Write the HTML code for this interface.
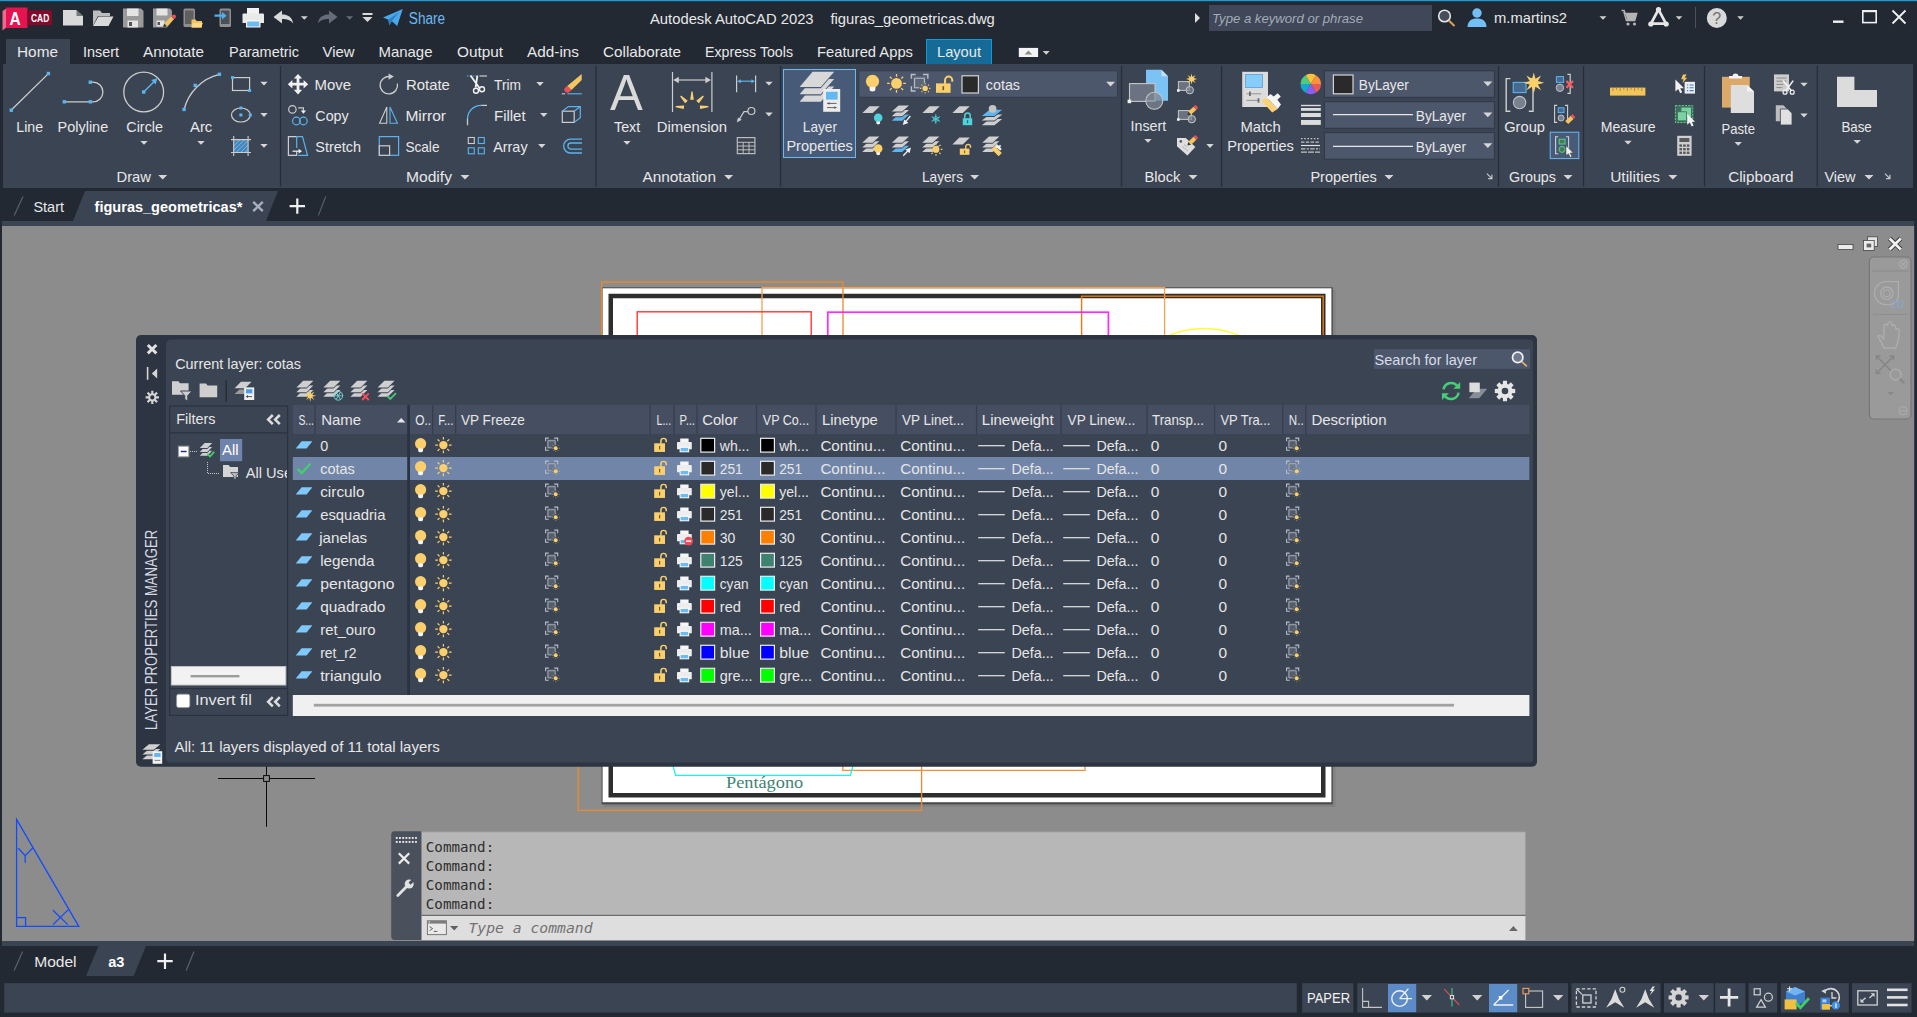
<!DOCTYPE html>
<html lang="en"><head><meta charset="utf-8"><title>Autodesk AutoCAD 2023 - figuras_geometricas.dwg</title>
<style>
html,body{margin:0;padding:0;background:#222933;overflow:hidden}
body{width:1917px;height:1017px;font-family:"Liberation Sans",sans-serif}
svg{display:block;position:absolute;left:0;top:0;font-family:"Liberation Sans",sans-serif}
text{white-space:pre}
</style></head><body>
<svg width="1917" height="1017" viewBox="0 0 1917 1017" shape-rendering="auto">
<rect x="0" y="0" width="1917" height="1017" fill="#222933"/>
<rect x="0" y="0" width="1917" height="1.2" fill="#1c9ad6"/>
<path d="M2.5 11 L7 8 L7 27 L2.5 30.5z" fill="#f0698c"/>
<path d="M6 7.5 h21.5 v20.5 h-21.5z" fill="#e5134f"/>
<rect x="27.5" y="10.3" width="24.5" height="14.9" fill="#820a2a"/>
<text x="9.4" y="25" font-size="18" fill="#ffffff" font-weight="bold" textLength="11.2" lengthAdjust="spacingAndGlyphs">A</text>
<text x="31" y="21.6" font-size="10.5" fill="#ffffff" font-weight="bold" textLength="18.2" lengthAdjust="spacingAndGlyphs">CAD</text>
<path d="M63 10 h13.5 l6.5 6 v9.5 h-20z" fill="#d9d9d9"/>
<path d="M76.5 10 v6 h6.5z" fill="#222933" opacity="0.55"/>
<path d="M93 10.5 h7 l2 2.5 h8 v3 h-12 l-5 9.5z" fill="#bdbdbd"/>
<path d="M98.5 16.5 h15 l-5 9.5 h-15.5z" fill="#d9d9d9"/>
<path d="M123 8.5 h18 l2.5 2.5 v16.5 h-20.5z" fill="#9a9a9a"/>
<rect x="127" y="8.5" width="11.5" height="7.5" fill="#e4e4e4"/>
<rect x="127.5" y="20.5" width="10.5" height="7" fill="#e4e4e4"/>
<rect x="129" y="22" width="3" height="4" fill="#555"/>
<path d="M153 8.5 h17 l2 2 v11 l-5 6 h-14z" fill="#9a9a9a"/>
<rect x="156.5" y="8.5" width="11" height="7" fill="#e4e4e4"/>
<rect x="156.5" y="20.5" width="8" height="6" fill="#e4e4e4"/>
<rect x="157.5" y="22" width="2.5" height="3" fill="#555"/>
<path d="M163 27.5 l1.2 -4 l7 -7 l2.8 2.8 l-7 7z" fill="#f2c45e"/>
<path d="M171.2 16.5 l1.4 -1.4 a1.8 1.8 0 0 1 2.8 2.8 l-1.4 1.4z" fill="#e8505a"/>
<path d="M163 27.5 l1.2 -4 l2.8 2.8z" fill="#3a3a3a"/>
<rect x="183.5" y="8.5" width="11.5" height="18.5" fill="#8f8f8f" rx="1.5"/>
<rect x="185" y="10.5" width="8.5" height="13.5" fill="#5f5f5f"/>
<path d="M191.5 19.5 h4 l1.2 1.5 h5.3 v6.5 h-10.5z" fill="#f2c45e"/>
<path d="M193 23 h9.8 l-1.6 4.5 h-9.7z" fill="#ffd98a"/>
<rect x="219.5" y="8.5" width="11.5" height="18.5" fill="#8f8f8f" rx="1.5"/>
<rect x="221" y="10.5" width="8.5" height="13.5" fill="#4a4f58"/>
<path d="M214.5 14.6 h7.5 v-2.6 l4.6 3.7 l-4.6 3.7 v-2.6 h-7.5z" fill="#4fb0f0"/>
<rect x="247" y="8" width="12" height="6" fill="#f2f2f2"/>
<path d="M243.5 13.5 h19.5 a1 1 0 0 1 1 1 v8.5 h-21.5 v-8.5 a1 1 0 0 1 1 -1z" fill="#e9e9e9"/>
<rect x="246" y="20" width="14.5" height="7.5" fill="#f6f6f6"/>
<rect x="247.2" y="21.5" width="12" height="5" fill="#6bbcf2"/>
<path d="M273.5 17 l8.5 -6.5 v4 c6 0 10 2.5 11.2 9 c-2.8 -3.6 -6 -4.6 -11.2 -4.6 v4.6z" fill="#d9d9d9"/>
<path d="M300.8 16.2h7l-3.5 3.6z" fill="#cfcfcf"/>
<path d="M337.5 17 l-8.5 -6.5 v4 c-6 0 -10 2.5 -11.2 9 c2.8 -3.6 6 -4.6 11.2 -4.6 v4.6z" fill="#666d7a"/>
<path d="M346.1 16.2h7l-3.5 3.6z" fill="#666d7a"/>
<rect x="362.5" y="13" width="10" height="2" fill="#d9d9d9"/>
<path d="M362.5 17h10l-5 5z" fill="#d9d9d9"/>
<path d="M383 17.5 L402.8 9 L397.2 26 L391.8 21.2 L389.2 25.2 L388.4 19.8z" fill="#49a7ea"/>
<path d="M388.4 19.8 L399 12 L391.8 21.2 L389.2 25.2z" fill="#2f7fc0"/>
<text x="408.8" y="24" font-size="16" fill="#6db9f1" textLength="36.4" lengthAdjust="spacingAndGlyphs">Share</text>
<text x="650" y="23.5" font-size="15.5" fill="#e8e8e8" textLength="163.6" lengthAdjust="spacingAndGlyphs">Autodesk AutoCAD 2023</text>
<text x="830.4" y="23.5" font-size="15.5" fill="#e8e8e8" textLength="164.4" lengthAdjust="spacingAndGlyphs">figuras_geometricas.dwg</text>
<path d="M1195 13 l5 5 l-5 5z" fill="#e0e0e0"/>
<rect x="1209" y="5" width="223" height="26" fill="#3f4758"/>
<text x="1212" y="22.5" font-size="13.5" fill="#a4abb8" font-style="italic" textLength="151" lengthAdjust="spacingAndGlyphs">Type a keyword or phrase</text>
<circle cx="1444.5" cy="16" r="5.8" fill="#464e5c" stroke="#e6e6e6" stroke-width="1.6"/>
<line x1="1448.8" y1="20.5" x2="1454.5" y2="26" stroke="#e0a050" stroke-width="2"/>
<circle cx="1477" cy="13" r="4.7" fill="#72bff5"/>
<path d="M1467.5 27 c0 -6 4 -8.5 9.5 -8.5 s9.5 2.5 9.5 8.5z" fill="#72bff5"/>
<text x="1494" y="23.3" font-size="15" fill="#e8e8e8" textLength="73" lengthAdjust="spacingAndGlyphs">m.martins2</text>
<path d="M1599.5 16.2h7l-3.5 3.6z" fill="#cfcfcf"/>
<path d="M1621.5 10.5 h2.6 l1 3 h11.6 l-2 7 h-8.2 l-2.6 -8.6" fill="none" stroke="#b4b4b4" stroke-width="1.5"/>
<path d="M1625.5 14 h10.8 l-1.7 6 h-7.4z" fill="#b4b4b4"/>
<circle cx="1628" cy="24" r="1.6" fill="#b4b4b4"/>
<circle cx="1634.5" cy="24" r="1.6" fill="#b4b4b4"/>
<path d="M1658.5 9.5 L1651 23.6 h15z" fill="none" stroke="#e6e6e6" stroke-width="2.7"/>
<circle cx="1658.5" cy="9.5" r="2.6" fill="#e6e6e6"/>
<circle cx="1650.8" cy="24" r="2.6" fill="#e6e6e6"/>
<circle cx="1666.2" cy="24" r="2.6" fill="#e6e6e6"/>
<path d="M1675.75 16.3h6.5l-3.25 3.4z" fill="#cfcfcf"/>
<line x1="1695.5" y1="7" x2="1695.5" y2="28" stroke="#4a5262" stroke-width="1"/>
<circle cx="1716.8" cy="18" r="10" fill="#d9d9d9"/>
<text x="1716.8" y="23.8" font-size="16" fill="#707070" text-anchor="middle">?</text>
<path d="M1737.25 16.3h6.5l-3.25 3.4z" fill="#cfcfcf"/>
<rect x="1833" y="20.5" width="10.5" height="2.4" fill="#f0f0f0"/>
<rect x="1862.8" y="11" width="13.4" height="11.6" fill="none" stroke="#f0f0f0" stroke-width="1.6"/>
<rect x="1862" y="10" width="15" height="2.2" fill="#f0f0f0"/>
<path d="M1892.5 10.5 L1905.5 23.5 M1905.5 10.5 L1892.5 23.5" fill="none" stroke="#f0f0f0" stroke-width="1.8"/>
<rect x="6" y="39" width="64" height="26" fill="#3b4453"/>
<rect x="926.5" y="39.5" width="65" height="25" fill="#156b96" stroke="#0f9ade" stroke-width="1"/>
<text x="17" y="57" font-size="15" fill="#e8e8e8" textLength="41" lengthAdjust="spacingAndGlyphs">Home</text>
<text x="83" y="57" font-size="15" fill="#e8e8e8" textLength="36" lengthAdjust="spacingAndGlyphs">Insert</text>
<text x="143" y="57" font-size="15" fill="#e8e8e8" textLength="61" lengthAdjust="spacingAndGlyphs">Annotate</text>
<text x="229" y="57" font-size="15" fill="#e8e8e8" textLength="70" lengthAdjust="spacingAndGlyphs">Parametric</text>
<text x="322.5" y="57" font-size="15" fill="#e8e8e8" textLength="32" lengthAdjust="spacingAndGlyphs">View</text>
<text x="378.5" y="57" font-size="15" fill="#e8e8e8" textLength="54" lengthAdjust="spacingAndGlyphs">Manage</text>
<text x="457" y="57" font-size="15" fill="#e8e8e8" textLength="46" lengthAdjust="spacingAndGlyphs">Output</text>
<text x="527" y="57" font-size="15" fill="#e8e8e8" textLength="52" lengthAdjust="spacingAndGlyphs">Add-ins</text>
<text x="603" y="57" font-size="15" fill="#e8e8e8" textLength="78" lengthAdjust="spacingAndGlyphs">Collaborate</text>
<text x="705" y="57" font-size="15" fill="#e8e8e8" textLength="88" lengthAdjust="spacingAndGlyphs">Express Tools</text>
<text x="817" y="57" font-size="15" fill="#e8e8e8" textLength="96" lengthAdjust="spacingAndGlyphs">Featured Apps</text>
<text x="937" y="57" font-size="15" fill="#e8e8e8" textLength="44" lengthAdjust="spacingAndGlyphs">Layout</text>
<rect x="1018.8" y="47.9" width="19.3" height="9.1" fill="#f4f4f4"/>
<path d="M1024.6 54.4 l3.8 -3.8 l3.8 3.8z" fill="#8a8a8a"/>
<path d="M1042.7 51h7l-3.5 3.8z" fill="#cfcfcf"/>
<rect x="3" y="64" width="1910" height="124" fill="#3b4453"/>
<rect x="279.9" y="66" width="1.3" height="120.5" fill="#272d39"/>
<rect x="595.4" y="66" width="1.3" height="120.5" fill="#272d39"/>
<rect x="779.9" y="66" width="1.3" height="120.5" fill="#272d39"/>
<rect x="1120.9" y="66" width="1.3" height="120.5" fill="#272d39"/>
<rect x="1220.9" y="66" width="1.3" height="120.5" fill="#272d39"/>
<rect x="1497.9" y="66" width="1.3" height="120.5" fill="#272d39"/>
<rect x="1582.9" y="66" width="1.3" height="120.5" fill="#272d39"/>
<rect x="1703.9" y="66" width="1.3" height="120.5" fill="#272d39"/>
<rect x="1816.7" y="66" width="1.3" height="120.5" fill="#272d39"/>
<line x1="11.3" y1="110" x2="48.4" y2="73.6" stroke="#cdcdcd" stroke-width="1.3"/>
<rect x="9.6" y="108.5" width="3.4" height="3.4" fill="#5bb4ee"/>
<rect x="46.7" y="71.8" width="3.4" height="3.4" fill="#5bb4ee"/>
<text x="16.3" y="132" font-size="14.5" fill="#e8e8e8" textLength="26.7" lengthAdjust="spacingAndGlyphs">Line</text>
<path d="M64.3 101.8 H90.3 M90.3 101.8 h2.8 a9.8 9.8 0 0 0 0 -19.6 h-2.8" fill="none" stroke="#cdcdcd" stroke-width="1.3"/>
<rect x="62.6" y="100.1" width="3.4" height="3.4" fill="#5bb4ee"/>
<rect x="88.6" y="100.1" width="3.4" height="3.4" fill="#5bb4ee"/>
<rect x="88.6" y="80.5" width="3.4" height="3.4" fill="#5bb4ee"/>
<text x="57.5" y="132" font-size="14.5" fill="#e8e8e8" textLength="50.7" lengthAdjust="spacingAndGlyphs">Polyline</text>
<circle cx="143.7" cy="92" r="19.9" fill="none" stroke="#cdcdcd" stroke-width="1.3"/>
<line x1="143.7" y1="92" x2="155" y2="80.7" stroke="#5bb4ee" stroke-width="1.4"/>
<path d="M157.4 78.2 l-1.8 6.2 l-4.4 -4.4z" fill="#5bb4ee"/>
<rect x="142" y="90.3" width="3.4" height="3.4" fill="#5bb4ee"/>
<text x="126.3" y="132" font-size="14.5" fill="#e8e8e8" textLength="36.7" lengthAdjust="spacingAndGlyphs">Circle</text>
<path d="M140.3 140.9h7.4l-3.7 3.8z" fill="#d6d6d6"/>
<path d="M184.1 109.4 A48 48 0 0 1 219.4 74.3" fill="none" stroke="#cdcdcd" stroke-width="1.3"/>
<rect x="182.4" y="107.7" width="3.4" height="3.4" fill="#5bb4ee"/>
<rect x="193.5" y="83.7" width="3.4" height="3.4" fill="#5bb4ee"/>
<rect x="217.7" y="72.6" width="3.4" height="3.4" fill="#5bb4ee"/>
<text x="190" y="132" font-size="14.5" fill="#e8e8e8" textLength="22.3" lengthAdjust="spacingAndGlyphs">Arc</text>
<path d="M197.3 140.9h7.4l-3.7 3.8z" fill="#d6d6d6"/>
<rect x="232.5" y="77.6" width="17.1" height="12.9" fill="none" stroke="#cdcdcd" stroke-width="1.2"/>
<rect x="231" y="76.1" width="3" height="3" fill="#5bb4ee"/>
<rect x="248.1" y="89" width="3" height="3" fill="#5bb4ee"/>
<ellipse cx="240.9" cy="115" rx="9.4" ry="7" fill="none" stroke="#cdcdcd" stroke-width="1.2"/>
<rect x="239.4" y="106.5" width="3" height="3" fill="#5bb4ee"/>
<rect x="239.4" y="113.5" width="3" height="3" fill="#5bb4ee"/>
<rect x="248.8" y="113.5" width="3" height="3" fill="#5bb4ee"/>
<rect x="233.7" y="139.6" width="14.4" height="12.9" fill="#4a83b4"/>
<path d="M233.7 146 l6.4 -6.4 M233.7 150.5 l10.9 -10.9 M236 152.5 l12.1 -12.1 M240.5 152.5 l7.6 -7.6 M245 152.5 l3.1 -3.1" fill="none" stroke="#6cc0f4" stroke-width="1"/>
<path d="M233.7 136 V156 M248.1 136 V156 M231 139.6 H251 M231 152.5 H251" fill="none" stroke="#cdcdcd" stroke-width="1.1"/>
<path d="M260.3 81.8h7.4l-3.7 3.8z" fill="#d6d6d6"/>
<path d="M260.3 113.1h7.4l-3.7 3.8z" fill="#d6d6d6"/>
<path d="M260.3 143.9h7.4l-3.7 3.8z" fill="#d6d6d6"/>
<text x="116.5" y="181.6" font-size="14.5" fill="#e8e8e8" textLength="34.5" lengthAdjust="spacingAndGlyphs">Draw</text>
<path d="M158.2 175h9l-4.5 4.6z" fill="#d6d6d6"/>
<g transform="translate(298,84.2)">
<path d="M0 -10.2 l4.2 4.6 h-2.8 v4.2 h4.2 v-2.8 l4.6 4.2 l-4.6 4.2 v-2.8 h-4.2 v4.2 h2.8 l-4.2 4.6 l-4.2 -4.6 h2.8 v-4.2 h-4.2 v2.8 l-4.6 -4.2 l4.6 -4.2 v2.8 h4.2 v-4.2 h-2.8z" fill="#f2f2f2"/>
</g>
<text x="314.5" y="89.8" font-size="14.5" fill="#e8e8e8" textLength="36.5" lengthAdjust="spacingAndGlyphs">Move</text>
<circle cx="292.4" cy="109.4" r="3.7" fill="none" stroke="#cdcdcd" stroke-width="1.2"/>
<path d="M298.2 107.8 h5.2 v3" fill="none" stroke="#cdcdcd" stroke-width="1.2"/>
<path d="M300.8 110.6 h5.2 l-2.6 3.2z" fill="#f2f2f2"/>
<circle cx="296.4" cy="121" r="3.8" fill="none" stroke="#5bb4ee" stroke-width="1.2"/>
<circle cx="303.4" cy="121" r="3.8" fill="none" stroke="#5bb4ee" stroke-width="1.2"/>
<text x="315.3" y="120.8" font-size="14.5" fill="#e8e8e8" textLength="33.4" lengthAdjust="spacingAndGlyphs">Copy</text>
<path d="M296.7 136.6 h-8.3 v18.7 h8.3 v-4" fill="none" stroke="#cdcdcd" stroke-width="1.2"/>
<path d="M296.7 148 v-11.4 h5.8 l5 18.7 h-9.2" fill="none" stroke="#5bb4ee" stroke-width="1.2"/>
<path d="M292.5 151.2 h6.5" fill="none" stroke="#f2f2f2" stroke-width="1.2"/>
<path d="M298.6 148.8 l3.4 2.4 l-3.4 2.4z" fill="#f2f2f2"/>
<text x="315.3" y="151.5" font-size="14.5" fill="#e8e8e8" textLength="45.7" lengthAdjust="spacingAndGlyphs">Stretch</text>
<path d="M390.2 76.6 A8.7 8.7 0 1 0 397.4 83.6" fill="none" stroke="#cdcdcd" stroke-width="1.3"/>
<path d="M388.6 73.4 l5.2 3.2 l-5.2 3.2z" fill="#cdcdcd"/>
<text x="406" y="89.8" font-size="14.5" fill="#e8e8e8" textLength="43.8" lengthAdjust="spacingAndGlyphs">Rotate</text>
<path d="M386.8 107 L379.6 123.2 H386.8z" fill="none" stroke="#cdcdcd" stroke-width="1.1"/>
<path d="M390 107 L397.4 123.2 H390z" fill="none" stroke="#5bb4ee" stroke-width="1.1"/>
<text x="405.4" y="120.8" font-size="14.5" fill="#e8e8e8" textLength="40.6" lengthAdjust="spacingAndGlyphs">Mirror</text>
<rect x="379.3" y="136.6" width="19.3" height="18.7" fill="none" stroke="#5bb4ee" stroke-width="1.2"/>
<rect x="379.3" y="145.8" width="10.3" height="9.5" fill="#3b4453" stroke="#cdcdcd" stroke-width="1.2"/>
<text x="405.4" y="151.5" font-size="14.5" fill="#e8e8e8" textLength="34.1" lengthAdjust="spacingAndGlyphs">Scale</text>
<path d="M467 76 h9" fill="none" stroke="#5bb4ee" stroke-width="1.2" stroke-dasharray="1.6 1.2"/>
<path d="M479.5 76 h7.5" fill="none" stroke="#cdcdcd" stroke-width="1.2"/>
<path d="M470.5 75.5 L479.8 88.5 M477.4 75.5 L475.6 87.5" fill="none" stroke="#f2f2f2" stroke-width="1.8"/>
<circle cx="476" cy="90.8" r="2.5" fill="none" stroke="#f2f2f2" stroke-width="1.4"/>
<circle cx="482" cy="89.2" r="2.5" fill="none" stroke="#f2f2f2" stroke-width="1.4"/>
<text x="494" y="89.8" font-size="14.5" fill="#e8e8e8" textLength="27" lengthAdjust="spacingAndGlyphs">Trim</text>
<path d="M536.3 82.1h7.4l-3.7 3.8z" fill="#d6d6d6"/>
<path d="M467.5 119 A13.7 13.7 0 0 1 481.2 105.3" fill="none" stroke="#5bb4ee" stroke-width="1.3"/>
<path d="M467.5 119 V125.2 M481.2 105.3 H487" fill="none" stroke="#cdcdcd" stroke-width="1.3"/>
<text x="494" y="120.8" font-size="14.5" fill="#e8e8e8" textLength="31.6" lengthAdjust="spacingAndGlyphs">Fillet</text>
<path d="M540.1 113.1h7.4l-3.7 3.8z" fill="#d6d6d6"/>
<rect x="468.3" y="137.5" width="6" height="6" fill="none" stroke="#cdcdcd" stroke-width="1.1"/>
<rect x="478.3" y="137.5" width="6" height="6" fill="none" stroke="#5bb4ee" stroke-width="1.1"/>
<rect x="468.3" y="147.8" width="6" height="6" fill="none" stroke="#5bb4ee" stroke-width="1.1"/>
<rect x="478.3" y="147.8" width="6" height="6" fill="none" stroke="#5bb4ee" stroke-width="1.1"/>
<text x="493.2" y="151.5" font-size="14.5" fill="#e8e8e8" textLength="34.4" lengthAdjust="spacingAndGlyphs">Array</text>
<path d="M538.1 144.1h7.4l-3.7 3.8z" fill="#d6d6d6"/>
<path d="M581.7 74 L581.7 80 L571.5 90 L567.2 86z" fill="#f4c660"/>
<path d="M567.2 86 L571.5 90 L569.6 91.8 a3 3 0 0 1 -4.3 -4.3z" fill="#ef4f5c"/>
<path d="M561.8 93.8 h3.4" fill="none" stroke="#cdcdcd" stroke-width="1.1"/>
<path d="M567.5 93.8 h14.4" fill="none" stroke="#5bb4ee" stroke-width="1.1"/>
<rect x="562.3" y="111.2" width="11.9" height="11.2" fill="none" stroke="#cdcdcd" stroke-width="1.2"/>
<path d="M562.3 111.2 l6 -4.6 h12 v11 l-6.1 4.8 M574.2 111.2 l6.1 -4.6" fill="none" stroke="#5bb4ee" stroke-width="1.2"/>
<path d="M582 139.2 H570.5 a6.9 6.9 0 0 0 0 13.8 H582" fill="none" stroke="#5bb4ee" stroke-width="1.3"/>
<path d="M582 143 H571 a3.1 3.1 0 0 0 0 6.2 H582" fill="none" stroke="#5bb4ee" stroke-width="1.3"/>
<text x="406" y="181.6" font-size="14.5" fill="#e8e8e8" textLength="46" lengthAdjust="spacingAndGlyphs">Modify</text>
<path d="M460.5 175h9l-4.5 4.6z" fill="#d6d6d6"/>
<text x="610" y="109.5" font-size="50" fill="#dadada" textLength="32.8" lengthAdjust="spacingAndGlyphs">A</text>
<text x="614" y="132" font-size="14.5" fill="#e8e8e8" textLength="26.2" lengthAdjust="spacingAndGlyphs">Text</text>
<path d="M623.3 140.9h7.4l-3.7 3.8z" fill="#d6d6d6"/>
<path d="M672.5 72 V112 M711.9 72 V112" fill="none" stroke="#cdcdcd" stroke-width="1.2"/>
<path d="M676 80 H708" fill="none" stroke="#cdcdcd" stroke-width="1.2"/>
<path d="M673.2 80 l5.6 -3.2 v6.4z M711 80 l-5.6 -3.2 v6.4z" fill="#cdcdcd"/>
<g transform="translate(692,107.8)">
<path d="M-1.8 -8 L-0.6 -16.4 L0.6 -16.4 L1.8 -8z" fill="#fbd06c" transform="rotate(0)"/>
<path d="M-1.8 -8 L-0.6 -16.4 L0.6 -16.4 L1.8 -8z" fill="#fbd06c" transform="rotate(44)"/>
<path d="M-1.8 -8 L-0.6 -16.4 L0.6 -16.4 L1.8 -8z" fill="#fbd06c" transform="rotate(-44)"/>
<path d="M-1.8 -8 L-0.6 -16.4 L0.6 -16.4 L1.8 -8z" fill="#fbd06c" transform="rotate(86)"/>
<path d="M-1.8 -8 L-0.6 -16.4 L0.6 -16.4 L1.8 -8z" fill="#fbd06c" transform="rotate(-86)"/>
</g>
<text x="656.8" y="132" font-size="14.5" fill="#e8e8e8" textLength="70.2" lengthAdjust="spacingAndGlyphs">Dimension</text>
<path d="M736.6 75.4 V92.2 M755.6 75.4 V92.2" fill="none" stroke="#cdcdcd" stroke-width="1.2"/>
<path d="M739 81.2 H753.2" fill="none" stroke="#5bb4ee" stroke-width="1.2"/>
<path d="M737.2 81.2 l3.6 -2 v4z M755 81.2 l-3.6 -2 v4z" fill="#5bb4ee"/>
<path d="M765.3 81.7h7.4l-3.7 3.8z" fill="#d6d6d6"/>
<circle cx="751.4" cy="111" r="3.5" fill="none" stroke="#cdcdcd" stroke-width="1.2"/>
<path d="M748 111.6 H744 L739.5 119" fill="none" stroke="#cdcdcd" stroke-width="1.2"/>
<path d="M736.8 122.4 l1.2 -5 l3.8 2.4z" fill="#cdcdcd"/>
<path d="M765.3 112.6h7.4l-3.7 3.8z" fill="#d6d6d6"/>
<rect x="737.3" y="137.6" width="17.6" height="16" fill="none" stroke="#bdbdbd" stroke-width="1.2"/>
<path d="M737.3 142.3 H754.9 M737.3 146 H754.9 M737.3 149.8 H754.9 M743.2 142.3 V153.6 M749 142.3 V153.6" fill="none" stroke="#bdbdbd" stroke-width="1"/>
<text x="642.4" y="181.6" font-size="14.5" fill="#e8e8e8" textLength="73.6" lengthAdjust="spacingAndGlyphs">Annotation</text>
<path d="M724.1 175h9l-4.5 4.6z" fill="#d6d6d6"/>
<rect x="783.5" y="69.5" width="72" height="88" fill="#475b78" stroke="#6cb9f0" stroke-width="1"/>
<path d="M812.6 87.8 h21.6 l-13.4 15.2 h-21.2z" fill="#475b78"/>
<path d="M812.6 86.6 h21.6 l-13.4 15.2 h-21.2z" fill="#d8d8d8"/>
<path d="M812.6 80.3 h21.6 l-13.4 15.2 h-21.2z" fill="#475b78"/>
<path d="M812.6 79.1 h21.6 l-13.4 15.2 h-21.2z" fill="#d8d8d8"/>
<path d="M812.6 73.0 h21.6 l-13.4 15.2 h-21.2z" fill="#475b78"/>
<path d="M812.6 71.8 h21.6 l-13.4 15.2 h-21.2z" fill="#d8d8d8"/>
<rect x="823.2" y="89" width="17" height="22.8" fill="#ececec"/>
<rect x="826" y="91.8" width="11.6" height="7.8" fill="#62b8f2"/>
<path d="M827 103.4 h9.6 M827 107.6 h9.6" fill="none" stroke="#555" stroke-width="0.9"/>
<path d="M827.4 103.4 l2 -1.4 v2.8z M836.4 107.6 l-2 -1.4 v2.8z" fill="#555"/>
<text x="802.8" y="132" font-size="14.5" fill="#e8e8e8" textLength="34.2" lengthAdjust="spacingAndGlyphs">Layer</text>
<text x="786.4" y="151" font-size="14.5" fill="#e8e8e8" textLength="66.4" lengthAdjust="spacingAndGlyphs">Properties</text>
<rect x="858.8" y="70.8" width="258.7" height="26.5" fill="#4c576c" stroke="#353d4c" stroke-width="1"/>
<circle cx="872.5" cy="81.3" r="6.6" fill="#fbd06c"/>
<path d="M869.6 86.9 h5.8 v2.4 a2.9 2.2 0 0 1 -5.8 0z" fill="#f4f4f4"/>
<circle cx="896.5" cy="83.4" r="5.4" fill="#fbd06c"/>
<path d="M903.2 83.4L905.9 83.4M901.24 88.14L903.15 90.05M896.5 90.1L896.5 92.8M891.76 88.14L889.85 90.05M889.8 83.4L887.1 83.4M891.76 78.66L889.85 76.75M896.5 76.7L896.5 74M901.24 78.66L903.15 76.75" fill="none" stroke="#fbd06c" stroke-width="1.3"/>
<g transform="translate(911.4,74.6)">
<g transform="scale(1.06)">
<rect x="1.5" y="1.5" width="12" height="12" fill="#69727f" opacity="0.55"/>
<path d="M0 4 V0 H4 M11 0 H15.5 V4 M0 11 V15.5 H4" fill="none" stroke="#b9bec8" stroke-width="1.4"/>
<path d="M3 3.4 H12.2 V8 M3 3.4 V12.4 H7.5" fill="none" stroke="#b9bec8" stroke-width="1"/>
</g>
<circle cx="13.78" cy="13.78" r="2.65" fill="#fbd06c"/>
<path d="M17.73 13.78L18.97 13.78M16.57 16.57L17.45 17.45M13.78 17.73L13.78 18.97M10.99 16.57L10.11 17.45M9.83 13.78L8.59 13.78M10.99 10.99L10.11 10.11M13.78 9.83L13.78 8.59M16.57 10.99L17.45 10.11" fill="none" stroke="#fbd06c" stroke-width="1.06"/>
</g>
<rect x="936" y="83.4" width="14.6" height="9.4" fill="#fbd06c"/>
<path d="M945.05 83.8 v-3.6 a3.6 3.6 0 0 1 7.2 0 v1.6" fill="none" stroke="#fbd06c" stroke-width="2"/>
<rect x="942.5" y="86.22" width="1.6" height="3.95" fill="#6a5a2a"/>
<rect x="962" y="75.8" width="16.4" height="17.2" fill="#2a2a2a" stroke="#d5d5d5" stroke-width="1.2"/>
<text x="985.8" y="89.6" font-size="14.5" fill="#e8e8e8" textLength="34.2" lengthAdjust="spacingAndGlyphs">cotas</text>
<path d="M1106.1 81.8h9l-4.5 4.8z" fill="#d6d6d6"/>
<path d="M869.4 106.2 h10.4 l-7 6.8 h-10.4z" fill="#cfcfcf"/>
<circle cx="878.2" cy="117.8" r="4.3" fill="#4fd3dc"/>
<path d="M876.31 121.45 h3.78 v1.56 a1.89 1.43 0 0 1 -3.78 0z" fill="#f4f4f4"/>
<path d="M898.6 114.6 h10.4 l-6.8 6.2 h-10.4z" fill="#5fb6ee"/>
<path d="M898.6 111 h10.4 l-6.8 6.2 h-10.4z" fill="#3b4453"/>
<path d="M898.6 110 h10.4 l-6.8 6.2 h-10.4z" fill="#cfcfcf"/>
<path d="M898.6 106.4 h10.4 l-6.8 6.2 h-10.4z" fill="#3b4453"/>
<path d="M898.6 105.4 h10.4 l-6.8 6.2 h-10.4z" fill="#cfcfcf"/>
<path d="M910.4 116 l-5.6 6.6" fill="none" stroke="#f2f2f2" stroke-width="1.3"/>
<path d="M902.8 125 l1.4 -5.6 l4.2 3.6z" fill="#f2f2f2"/>
<path d="M929.4 106.2 h10.4 l-7 6.8 h-10.4z" fill="#cfcfcf"/>
<g transform="translate(935.8,119)">
<path d="M-4.8 0 H4.8" stroke="#4fd3dc" stroke-width="1" fill="none" transform="rotate(30)"/>
<path d="M-4.8 0 H4.8" stroke="#4fd3dc" stroke-width="1" fill="none" transform="rotate(90)"/>
<path d="M-4.8 0 H4.8" stroke="#4fd3dc" stroke-width="1" fill="none" transform="rotate(150)"/>
<path d="M2.6 0 L1.3 2.25 L-1.3 2.25 L-2.6 0 L-1.3 -2.25 L1.3 -2.25z" stroke="#4fd3dc" stroke-width="0.7" fill="none"/>
</g>
<path d="M959.4 106.2 h10.4 l-7 6.8 h-10.4z" fill="#cfcfcf"/>
<rect x="962.8" y="118.2" width="9.4" height="7" fill="#4fd3dc"/>
<path d="M964.8 118.4 v-2.6 a2.7 2.7 0 0 1 5.4 0 v2.6" fill="none" stroke="#4fd3dc" stroke-width="1.5"/>
<rect x="966.9" y="120.2" width="1.3" height="3" fill="#2a6a70"/>
<path d="M989.6 119 h12.6 l-7.8 6.2 h-12.6z" fill="#cfcfcf"/>
<path d="M989.6 115.4 h12.6 l-7.8 6.2 h-12.6z" fill="#3b4453"/>
<path d="M989.6 114.4 h12.6 l-7.8 6.2 h-12.6z" fill="#cfcfcf"/>
<path d="M989.6 110.8 h12.6 l-7.8 6.2 h-12.6z" fill="#3b4453"/>
<path d="M989.6 109.8 h12.6 l-7.8 6.2 h-12.6z" fill="#5fb6ee"/>
<circle cx="992.6" cy="108.8" r="3.9" fill="#c4c4c4"/>
<path d="M869 145.8 h10.4 l-6.8 6.2 h-10.4z" fill="#cfcfcf"/>
<path d="M869 142.2 h10.4 l-6.8 6.2 h-10.4z" fill="#3b4453"/>
<path d="M869 141.2 h10.4 l-6.8 6.2 h-10.4z" fill="#cfcfcf"/>
<path d="M869 137.6 h10.4 l-6.8 6.2 h-10.4z" fill="#3b4453"/>
<path d="M869 136.6 h10.4 l-6.8 6.2 h-10.4z" fill="#cfcfcf"/>
<circle cx="878.2" cy="148.6" r="4.3" fill="#fbd06c"/>
<path d="M876.31 152.25 h3.78 v1.56 a1.89 1.43 0 0 1 -3.78 0z" fill="#f4f4f4"/>
<path d="M898.6 145.8 h10.4 l-6.8 6.2 h-10.4z" fill="#5fb6ee"/>
<path d="M898.6 142.2 h10.4 l-6.8 6.2 h-10.4z" fill="#3b4453"/>
<path d="M898.6 141.2 h10.4 l-6.8 6.2 h-10.4z" fill="#cfcfcf"/>
<path d="M898.6 137.6 h10.4 l-6.8 6.2 h-10.4z" fill="#3b4453"/>
<path d="M898.6 136.6 h10.4 l-6.8 6.2 h-10.4z" fill="#cfcfcf"/>
<path d="M903.2 155.8 l5.8 -6" fill="none" stroke="#f2f2f2" stroke-width="1.3"/>
<path d="M911 147.6 l-1.4 5.6 l-4.2 -3.8z" fill="#f2f2f2"/>
<path d="M929 145.8 h10.4 l-6.8 6.2 h-10.4z" fill="#cfcfcf"/>
<path d="M929 142.2 h10.4 l-6.8 6.2 h-10.4z" fill="#3b4453"/>
<path d="M929 141.2 h10.4 l-6.8 6.2 h-10.4z" fill="#cfcfcf"/>
<path d="M929 137.6 h10.4 l-6.8 6.2 h-10.4z" fill="#3b4453"/>
<path d="M929 136.6 h10.4 l-6.8 6.2 h-10.4z" fill="#cfcfcf"/>
<circle cx="936" cy="149.4" r="3.4" fill="#fbd06c"/>
<path d="M940.7 149.4L942.4 149.4M939.32 152.72L940.53 153.93M936 154.1L936 155.8M932.68 152.72L931.47 153.93M931.3 149.4L929.6 149.4M932.68 146.08L931.47 144.87M936 144.7L936 143M939.32 146.08L940.53 144.87" fill="none" stroke="#fbd06c" stroke-width="1.2"/>
<path d="M959.4 137.6 h10.4 l-7 6.8 h-10.4z" fill="#cfcfcf"/>
<rect x="959.8" y="148.6" width="9.64" height="6.2" fill="#fbd06c"/>
<path d="M965.77 149 v-2.38 a2.38 2.38 0 0 1 4.75 0 v1.06" fill="none" stroke="#fbd06c" stroke-width="1.32"/>
<rect x="964.09" y="150.46" width="1.06" height="2.61" fill="#6a5a2a"/>
<path d="M989 145.8 h10.4 l-6.8 6.2 h-10.4z" fill="#cfcfcf"/>
<path d="M989 142.2 h10.4 l-6.8 6.2 h-10.4z" fill="#3b4453"/>
<path d="M989 141.2 h10.4 l-6.8 6.2 h-10.4z" fill="#cfcfcf"/>
<path d="M989 137.6 h10.4 l-6.8 6.2 h-10.4z" fill="#3b4453"/>
<path d="M989 136.6 h10.4 l-6.8 6.2 h-10.4z" fill="#cfcfcf"/>
<path d="M991.6 149.2 l3.2 -3.2 l7 7 l-3.2 3.2z" fill="#fbd06c"/>
<path d="M994.8 146 l2 -2 l2 2 l1.2 -1.2 l1.2 1.2 l-1.2 1.2 l1.8 1.8 l-1.6 1.6 z" fill="#f2f2f2"/>
<text x="922" y="181.6" font-size="14.5" fill="#e8e8e8" textLength="41" lengthAdjust="spacingAndGlyphs">Layers</text>
<path d="M970.1 175h9l-4.5 4.6z" fill="#d6d6d6"/>
<path d="M1146 69.8 h15.5 l6.5 6.5 v24.4 h-22z" fill="#7cc3f5"/>
<path d="M1161.5 69.8 v6.5 h6.5z" fill="#bfe2fb"/>
<rect x="1129.5" y="83.6" width="25.5" height="17.8" fill="#6b7382" stroke="#c6c6c6" stroke-width="1.1"/>
<circle cx="1154.3" cy="100.8" r="8.5" fill="#7d8593" stroke="#c6c6c6" stroke-width="1.1" fill-opacity="0.75"/>
<path d="M1146 100.8 h9 v-8.4" fill="none" stroke="#9aa2b0" stroke-width="1"/>
<rect x="1127.6" y="99.6" width="3.6" height="3.6" fill="#f0f0f0"/>
<text x="1130.6" y="130.8" font-size="14.5" fill="#e8e8e8" textLength="35.6" lengthAdjust="spacingAndGlyphs">Insert</text>
<path d="M1144.3 138.9h7.4l-3.7 3.8z" fill="#d6d6d6"/>
<rect x="1178.4" y="81.6" width="11" height="8.8" fill="#6b7382" stroke="#c6c6c6" stroke-width="1"/>
<circle cx="1189.8" cy="90.2" r="3.7" fill="#7d8593" stroke="#c6c6c6" stroke-width="1" fill-opacity="0.7"/>
<rect x="1177" y="89.2" width="2.6" height="2.6" fill="#f0f0f0"/>
<path d="M1197.2 79L1193.72 79.88L1195.56 82.96L1192.48 81.12L1191.6 84.6L1190.72 81.12L1187.64 82.96L1189.48 79.88L1186 79L1189.48 78.12L1187.64 75.04L1190.72 76.88L1191.6 73.4L1192.48 76.88L1195.56 75.04L1193.72 78.12z" fill="#fbd06c"/>
<rect x="1178.4" y="110.6" width="13" height="8.8" fill="#6b7382" stroke="#c6c6c6" stroke-width="1"/>
<circle cx="1191.8" cy="119.2" r="3.7" fill="#7d8593" stroke="#c6c6c6" stroke-width="1" fill-opacity="0.7"/>
<rect x="1177" y="118.2" width="2.6" height="2.6" fill="#f0f0f0"/>
<path d="M1187.4 115.2L1191.17 114.55L1188.3 111.48z" fill="#3a3a3a"/>
<path d="M1191.17 114.55L1196.34 109.71L1193.47 106.64L1188.3 111.48z" fill="#f3c45d"/>
<path d="M1196.34 109.71L1198.24 107.93L1195.36 104.87L1193.47 106.64z" fill="#ef4f5c"/>
<path d="M1177 138 h8.8 l9.6 9 l-8 8.6 l-10.4 -9.4z" fill="#dedede"/>
<circle cx="1180.8" cy="141.4" r="1.3" fill="#555"/>
<path d="M1182.6 146.6 l5.4 4.6 M1184.4 144.8 l2.4 2" fill="none" stroke="#8a8a8a" stroke-width="0.8" stroke-dasharray="1.6 1"/>
<path d="M1187.4 145.4L1191.16 144.7L1188.26 141.67z" fill="#3a3a3a"/>
<path d="M1191.16 144.7L1196.37 139.71L1193.47 136.68L1188.26 141.67z" fill="#f3c45d"/>
<path d="M1196.37 139.71L1198.25 137.92L1195.35 134.88L1193.47 136.68z" fill="#ef4f5c"/>
<path d="M1206.3 144.1h7.4l-3.7 3.8z" fill="#d6d6d6"/>
<text x="1144.6" y="181.6" font-size="14.5" fill="#e8e8e8" textLength="35.8" lengthAdjust="spacingAndGlyphs">Block</text>
<path d="M1188.5 175h9l-4.5 4.6z" fill="#d6d6d6"/>
<rect x="1242.2" y="71.8" width="25.8" height="35.2" fill="#dcdcdc"/>
<rect x="1242.2" y="71.8" width="1" height="35.2" fill="#bdbdbd"/>
<rect x="1245.4" y="74.4" width="17.2" height="13" fill="#86cdfb" stroke="#5a9fd6" stroke-width="0.8"/>
<path d="M1246.6 93.8 h14.6 M1246.6 100.4 h12" fill="none" stroke="#8a8a8a" stroke-width="0.9"/>
<rect x="1249" y="91.6" width="1.8" height="4.4" fill="#6a6a6a"/>
<rect x="1257.6" y="98.2" width="1.8" height="4.4" fill="#6a6a6a"/>
<path d="M1261.4 100.7 L1266.6 97.4 L1277.6 108.9 L1272.2 112.4z" fill="#fbd374"/>
<path d="M1266.6 97.4 L1270.4 94 L1273.8 96.6 L1277.6 93.2 L1280.8 96.4 L1277.4 99.8 L1281 104.6 L1277.6 108.9z" fill="#f4f4f4"/>
<text x="1240.4" y="131.8" font-size="14.5" fill="#e8e8e8" textLength="40.4" lengthAdjust="spacingAndGlyphs">Match</text>
<text x="1227.3" y="151.4" font-size="14.5" fill="#e8e8e8" textLength="66.5" lengthAdjust="spacingAndGlyphs">Properties</text>
<path d="M1310.8 84L1305.7 75.17A10.2 10.2 0 0 1 1315.9 75.17z" fill="#fdc23c"/>
<path d="M1310.8 84L1315.9 75.17A10.2 10.2 0 0 1 1321 84z" fill="#fb923c"/>
<path d="M1310.8 84L1321 84A10.2 10.2 0 0 1 1315.9 92.83z" fill="#e85a5a"/>
<path d="M1310.8 84L1315.9 92.83A10.2 10.2 0 0 1 1305.7 92.83z" fill="#8b5cf6"/>
<path d="M1310.8 84L1305.7 92.83A10.2 10.2 0 0 1 1300.6 84z" fill="#14a8cc"/>
<path d="M1310.8 84L1300.6 84A10.2 10.2 0 0 1 1305.7 75.17z" fill="#4fca82"/>
<rect x="1301" y="104.8" width="19.8" height="1.4" fill="#dcdcdc"/>
<rect x="1301" y="108" width="19.8" height="2.8" fill="#dcdcdc"/>
<rect x="1301" y="113" width="19.8" height="4" fill="#dcdcdc"/>
<rect x="1301" y="120" width="19.8" height="4.9" fill="#dcdcdc"/>
<path d="M1301 138.6 h19" fill="none" stroke="#c4c4c4" stroke-width="1.2" stroke-dasharray="1.6 1.6"/>
<path d="M1301 142.2 h19" fill="none" stroke="#c4c4c4" stroke-width="1.2" stroke-dasharray="3.4 1.4"/>
<path d="M1301 145.5 h19" fill="none" stroke="#e0e0e0" stroke-width="1.2"/>
<path d="M1301 148.8 h19" fill="none" stroke="#c4c4c4" stroke-width="1.2" stroke-dasharray="4.4 1.4 2 1.4"/>
<path d="M1301 152.1 h19" fill="none" stroke="#c4c4c4" stroke-width="1.2" stroke-dasharray="6 1"/>
<rect x="1324.4" y="70.8" width="170" height="26.5" fill="#4c576c" stroke="#303846" stroke-width="1"/>
<path d="M1483.3 81.45h9l-4.5 4.8z" fill="#d6d6d6"/>
<rect x="1324.4" y="101.7" width="170" height="26.6" fill="#4c576c" stroke="#303846" stroke-width="1"/>
<path d="M1483.3 112.4h9l-4.5 4.8z" fill="#d6d6d6"/>
<rect x="1324.4" y="132.6" width="170" height="26.6" fill="#4c576c" stroke="#303846" stroke-width="1"/>
<path d="M1483.3 143.3h9l-4.5 4.8z" fill="#d6d6d6"/>
<rect x="1333.4" y="75" width="19.6" height="18.8" fill="#2a2a2a" stroke="#d5d5d5" stroke-width="1.2"/>
<text x="1358.8" y="89.7" font-size="14.5" fill="#e8e8e8" textLength="50" lengthAdjust="spacingAndGlyphs">ByLayer</text>
<line x1="1333" y1="114.7" x2="1413" y2="114.7" stroke="#e6e6e6" stroke-width="1.2"/>
<text x="1415.8" y="121" font-size="14.5" fill="#e8e8e8" textLength="50.2" lengthAdjust="spacingAndGlyphs">ByLayer</text>
<line x1="1333" y1="146.4" x2="1413" y2="146.4" stroke="#e6e6e6" stroke-width="1.2"/>
<text x="1415.8" y="151.9" font-size="14.5" fill="#e8e8e8" textLength="50.2" lengthAdjust="spacingAndGlyphs">ByLayer</text>
<text x="1310.4" y="181.6" font-size="14.5" fill="#e8e8e8" textLength="66.4" lengthAdjust="spacingAndGlyphs">Properties</text>
<path d="M1384.5 175h9l-4.5 4.6z" fill="#d6d6d6"/>
<path d="M1486.9 173.6 l4.8 4.8 M1491.9 174.8 v3.8 h-3.8" fill="none" stroke="#c9c9c9" stroke-width="1.2"/>
<path d="M1510.4 78.6 H1506.2 V111.2 H1510.4 M1528.8 78.6 H1533 V111.2 H1528.8" fill="none" stroke="#d0d0d0" stroke-width="1.4"/>
<rect x="1513.2" y="82.4" width="12.8" height="10.2" fill="#46698f" stroke="#5bb4ee" stroke-width="1.1"/>
<circle cx="1519.6" cy="102.6" r="6.2" fill="#79818f" stroke="#bfc3cb" stroke-width="1.1"/>
<path d="M1533.8 72.4L1535.48 78.73L1541.15 75.45L1537.87 81.12L1544.2 82.8L1537.87 84.48L1541.15 90.15L1535.48 86.87L1533.8 93.2L1532.12 86.87L1526.45 90.15L1529.73 84.48L1523.4 82.8L1529.73 81.12L1526.45 75.45L1532.12 78.73z" fill="#fbd06c"/>
<text x="1504.2" y="131.8" font-size="14.5" fill="#e8e8e8" textLength="40.8" lengthAdjust="spacingAndGlyphs">Group</text>
<path d="M1567.4 74.4 h2.8 v19 h-2.8" fill="none" stroke="#d0d0d0" stroke-width="1.2"/>
<rect x="1556.4" y="76.6" width="7.2" height="5.8" fill="#46698f" stroke="#5bb4ee" stroke-width="1"/>
<circle cx="1559.9" cy="87.8" r="3.7" fill="#79818f" stroke="#bfc3cb" stroke-width="1"/>
<path d="M1566.4 81 l6.6 6.8 M1573 81 l-6.6 6.8" fill="none" stroke="#ff5a64" stroke-width="2.1"/>
<path d="M1557.2 105.4 h-2.6 v17 h2.6" fill="none" stroke="#d0d0d0" stroke-width="1.1"/>
<path d="M1565 105.4 h2.6 v17 h-2.6" fill="none" stroke="#d0d0d0" stroke-width="1.1"/>
<rect x="1558.2" y="107.8" width="5.8" height="4.8" fill="#46698f" stroke="#5bb4ee" stroke-width="1"/>
<circle cx="1561.1" cy="118" r="3" fill="#79818f" stroke="#bfc3cb" stroke-width="1"/>
<path d="M1564.4 124.6L1568.17 123.94L1565.3 120.88z" fill="#3a3a3a"/>
<path d="M1568.17 123.94L1573.54 118.91L1570.67 115.85L1565.3 120.88z" fill="#f3c45d"/>
<path d="M1573.54 118.91L1575.44 117.13L1572.56 114.07L1570.67 115.85z" fill="#ef4f5c"/>
<rect x="1550.2" y="132.2" width="28.6" height="26.4" fill="#475b78" stroke="#6cb9f0" stroke-width="1"/>
<path d="M1558.2 136.8 h-2.6 v17 h2.6" fill="none" stroke="#d0d0d0" stroke-width="1.1"/>
<path d="M1566 136.8 h2.6 v17 h-2.6" fill="none" stroke="#d0d0d0" stroke-width="1.1"/>
<rect x="1559.2" y="139.2" width="5.8" height="4.8" fill="#3f7c57" stroke="#5fce86" stroke-width="1"/>
<circle cx="1562.1" cy="149.4" r="3" fill="#3f7c57" stroke="#5fce86" stroke-width="1"/>
<path d="M1566 145.6 v10.2 l2.4 -2.2 l1.8 3.8 l1.8 -0.8 l-1.8 -3.6 h3.2z" fill="#f2f2f2" stroke="#333" stroke-width="0.5"/>
<text x="1509" y="181.6" font-size="14.5" fill="#e8e8e8" textLength="47" lengthAdjust="spacingAndGlyphs">Groups</text>
<path d="M1563.5 175h9l-4.5 4.6z" fill="#d6d6d6"/>
<rect x="1610" y="87.6" width="35.4" height="8" fill="#f2c55c"/>
<path d="M1613 87.6 v3.4M1616.6 87.6 v2.2M1620.2 87.6 v3.4M1623.8 87.6 v2.2M1627.4 87.6 v3.4M1631 87.6 v2.2M1634.6 87.6 v3.4M1638.2 87.6 v2.2M1641.8 87.6 v3.4" fill="none" stroke="#b5882e" stroke-width="1"/>
<text x="1600.8" y="132.4" font-size="14.5" fill="#e8e8e8" textLength="54.8" lengthAdjust="spacingAndGlyphs">Measure</text>
<path d="M1624.3 140.7h7.4l-3.7 3.8z" fill="#d6d6d6"/>
<path d="M1683 74.4 l3.6 0 l-2 3.4 h2.6 l-5 5.4 l1.4 -4 h-2.4z" fill="#f4c660"/>
<rect x="1684.6" y="81.8" width="10.4" height="11.8" fill="#ececec"/>
<path d="M1687 85 h1.2 M1689.6 85 h4 M1687 87.8 h1.2 M1689.6 87.8 h4 M1687 90.6 h1.2 M1689.6 90.6 h4" fill="none" stroke="#3b7fd6" stroke-width="1.1"/>
<path d="M1675.4 79.6 v12 l2.8 -2.6 l2 4.2 l2 -1 l-2 -4 h3.8z" fill="#f2f2f2"/>
<rect x="1675.4" y="105.6" width="17.4" height="17" fill="#3f6f5c" stroke="#63cc8e" stroke-width="1" stroke-dasharray="2 1.2"/>
<rect x="1681.4" y="107.6" width="9.6" height="9.6" fill="#79d2a0"/>
<rect x="1677.4" y="111.8" width="9.2" height="9" fill="#79d2a0" stroke="#3f6f5c" stroke-width="0.8"/>
<path d="M1687.2 113.8 v11 l2.6 -2.4 l1.9 4 l1.9 -0.9 l-1.9 -3.8 h3.4z" fill="#f2f2f2"/>
<rect x="1677.2" y="135.8" width="14.4" height="20" fill="#cfcfcf"/>
<rect x="1679.4" y="138" width="10" height="4" fill="#5a5a5a"/>
<rect x="1679.4" y="144.4" width="2.6" height="2.4" fill="#5a5a5a"/>
<rect x="1683.1" y="144.4" width="2.6" height="2.4" fill="#5a5a5a"/>
<rect x="1686.8" y="144.4" width="2.6" height="2.4" fill="#5a5a5a"/>
<rect x="1679.4" y="148" width="2.6" height="2.4" fill="#5a5a5a"/>
<rect x="1683.1" y="148" width="2.6" height="2.4" fill="#5a5a5a"/>
<rect x="1686.8" y="148" width="2.6" height="2.4" fill="#5a5a5a"/>
<rect x="1679.4" y="151.6" width="2.6" height="2.4" fill="#5a5a5a"/>
<rect x="1683.1" y="151.6" width="2.6" height="2.4" fill="#5a5a5a"/>
<rect x="1686.8" y="151.6" width="2.6" height="2.4" fill="#5a5a5a"/>
<text x="1610.2" y="181.6" font-size="14.5" fill="#e8e8e8" textLength="49.8" lengthAdjust="spacingAndGlyphs">Utilities</text>
<path d="M1668.3 175h9l-4.5 4.6z" fill="#d6d6d6"/>
<rect x="1722" y="76.8" width="27.8" height="30.8" fill="#dba96a"/>
<path d="M1729 78.4 v-2.4 h3.4 a3.2 3.2 0 0 1 6.2 0 h3.4 v2.4z" fill="#f4f4f4"/>
<path d="M1730.8 85 h16.4 l6.8 6.6 v21.4 h-23.2z" fill="#dedede"/>
<path d="M1747.2 85 v6.6 h6.8z" fill="#f6f6f6"/>
<text x="1721.6" y="133.5" font-size="14.5" fill="#e8e8e8" textLength="33.4" lengthAdjust="spacingAndGlyphs">Paste</text>
<path d="M1734.5 141.9h7.4l-3.7 3.8z" fill="#d6d6d6"/>
<rect x="1774" y="74.4" width="15" height="17" fill="#cdcdcd"/>
<path d="M1776.4 78 h10 M1776.4 81.2 h10 M1776.4 84.4 h7 M1776.4 87.6 h6" fill="none" stroke="#8a8a8a" stroke-width="1"/>
<path d="M1783 80.6 L1791.6 91 M1793.2 80.6 L1785.6 91" fill="none" stroke="#f2f2f2" stroke-width="1.6"/>
<circle cx="1785" cy="92.2" r="2" fill="none" stroke="#f2f2f2" stroke-width="1.2"/>
<circle cx="1792.2" cy="92.2" r="2" fill="none" stroke="#f2f2f2" stroke-width="1.2"/>
<path d="M1800.3 82.8h7.4l-3.7 3.8z" fill="#d6d6d6"/>
<path d="M1775.8 105.2 h7.6 l3 3 v13 h-10.6z" fill="#bdbdbd"/>
<path d="M1780.4 109 h7.4 l4.2 4.2 v11.8 h-11.6z" fill="#e0e0e0" stroke="#3b4453" stroke-width="0.8"/>
<path d="M1800.3 113.6h7.4l-3.7 3.8z" fill="#d6d6d6"/>
<text x="1728.2" y="181.6" font-size="14.5" fill="#e8e8e8" textLength="65.4" lengthAdjust="spacingAndGlyphs">Clipboard</text>
<path d="M1837 76.8 H1854.4 V90 H1877 V107 H1837z" fill="#dcdcdc"/>
<text x="1841.4" y="132.4" font-size="14.5" fill="#e8e8e8" textLength="30.4" lengthAdjust="spacingAndGlyphs">Base</text>
<path d="M1853.5 139.9h7.4l-3.7 3.8z" fill="#d6d6d6"/>
<text x="1824.4" y="181.6" font-size="14.5" fill="#e8e8e8" textLength="31.2" lengthAdjust="spacingAndGlyphs">View</text>
<path d="M1864.5 175h9l-4.5 4.6z" fill="#d6d6d6"/>
<path d="M1884.9 173.6 l4.8 4.8 M1889.9 174.8 v3.8 h-3.8" fill="none" stroke="#c9c9c9" stroke-width="1.2"/>
<path d="M73 221 L85 191 H278 L266 221z" fill="#3b4453"/>
<rect x="2" y="221" width="1912.2" height="5" fill="#3b4453"/>
<line x1="14.2" y1="215.4" x2="23" y2="196.4" stroke="#596070" stroke-width="1.2"/>
<line x1="318.4" y1="215.4" x2="325.8" y2="196.4" stroke="#596070" stroke-width="1.2"/>
<text x="33.4" y="211.6" font-size="15" fill="#e8e8e8" textLength="30.6" lengthAdjust="spacingAndGlyphs">Start</text>
<text x="94.6" y="211.6" font-size="15" fill="#ffffff" font-weight="bold" textLength="147.8" lengthAdjust="spacingAndGlyphs">figuras_geometricas*</text>
<path d="M253.2 201.8 l9.6 9.4 M262.8 201.8 l-9.6 9.4" fill="none" stroke="#a9afbb" stroke-width="2.4"/>
<path d="M289.6 206.2 h15.4 M297.3 198.6 v15.2" fill="none" stroke="#f0f0f0" stroke-width="2.2"/>
<rect x="2" y="226" width="1912.2" height="715" fill="#8c8c8c"/>
<rect x="2" y="941" width="1912.2" height="5" fill="#3b4453"/>
<defs><clipPath id="cv"><rect x="2" y="226" width="1912" height="715"/></clipPath></defs>
<rect x="604" y="290" width="731.4" height="517" fill="#7c7c7c" opacity="0.6"/>
<rect x="601.6" y="287.3" width="731.2" height="517.1" fill="#4c4c4c"/>
<rect x="602.6" y="288.3" width="728.8" height="513.9" fill="#ffffff"/>
<rect x="610.75" y="296" width="712.5" height="499.25" fill="none" stroke="#2e2e2e" stroke-width="4.5"/>
<rect x="601.6" y="282" width="241.4" height="278" fill="none" stroke="#ea8a2c" stroke-width="1.3"/>
<rect x="762" y="287.6" width="402.6" height="272.4" fill="none" stroke="#f0a050" stroke-width="1.3"/>
<rect x="1081.6" y="296.2" width="241.6" height="403.8" fill="none" stroke="#e87a0c" stroke-width="1.4"/>
<rect x="578.2" y="560" width="343.4" height="250.4" fill="none" stroke="#ea8a2c" stroke-width="1.3"/>
<rect x="842.8" y="560" width="242.2" height="210.4" fill="none" stroke="#f0923a" stroke-width="1.3"/>
<rect x="637.2" y="311.8" width="174" height="208.2" fill="none" stroke="#ff3535" stroke-width="1.4"/>
<rect x="827.8" y="312.2" width="280.6" height="207.8" fill="none" stroke="#ff28ff" stroke-width="1.7"/>
<circle cx="1204" cy="419.5" r="91" fill="none" stroke="#ffff30" stroke-width="1.5"/>
<path d="M668 748 L675.6 775.4 H850.4 L857.5 748" fill="none" stroke="#20f0f0" stroke-width="1.3"/>
<text x="726" y="787.6" font-size="17.5" fill="#3f8472" font-family="'Liberation Serif', serif" textLength="77.2" lengthAdjust="spacingAndGlyphs">Pentágono</text>
<path d="M218 778.5 H315 M266.5 760 V826.8" fill="none" stroke="#0a0a0a" stroke-width="1"/>
<rect x="263.6" y="775.6" width="5.8" height="5.8" fill="#8c8c8c" stroke="#0a0a0a" stroke-width="1"/>
<path d="M16.6 819.4 V926.4 H78.8z" fill="none" stroke="#114bff" stroke-width="1.3" stroke-linejoin="miter"/>
<path d="M16.6 917.6 H25.6 V926.4" fill="none" stroke="#114bff" stroke-width="1.3"/>
<path d="M18.2 848.2 L25.2 855.6 L32.8 848 M25.2 855.6 V862.8" fill="none" stroke="#114bff" stroke-width="1.3"/>
<path d="M53 910.2 L67.8 924.6 M53 924.6 L68.6 909.4" fill="none" stroke="#114bff" stroke-width="1.3"/>
<rect x="1838" y="244.4" width="15" height="5.2" fill="#ececec" stroke="#444" stroke-width="0.8"/>
<rect x="1867.4" y="236.8" width="10.2" height="9.8" fill="#e4e4e4" stroke="#444" stroke-width="0.8"/>
<rect x="1863.4" y="240.4" width="10.8" height="10" fill="#ececec" stroke="#444" stroke-width="0.8"/>
<rect x="1866.6" y="243.6" width="4.6" height="3.8" fill="#666"/>
<path d="M1889.6 238.4 L1900.8 249.4 M1900.8 238.4 L1889.6 249.4" fill="none" stroke="#333" stroke-width="4.4"/>
<path d="M1889.6 238.4 L1900.8 249.4 M1900.8 238.4 L1889.6 249.4" fill="none" stroke="#f2f2f2" stroke-width="2.8"/>
<rect x="1869.4" y="257" width="41.6" height="162" fill="#9a9a9a" stroke="#777" stroke-width="1.2" rx="4.5"/>
<line x1="1872" y1="271" x2="1908.5" y2="271" stroke="#8a8a8a" stroke-width="1"/>
<line x1="1873" y1="314.4" x2="1907" y2="314.4" stroke="#8e8e8e" stroke-width="1"/>
<circle cx="1903.2" cy="264.2" r="4" fill="none" stroke="#adadad" stroke-width="1.1"/>
<path d="M1900.8 261.8 l4.8 4.8 M1905.6 261.8 l-4.8 4.8" fill="none" stroke="#adadad" stroke-width="1.1"/>
<path d="M1886 281.6 h12.4 v14 a9 9 0 0 1 -9 9 h-3.4 a10.5 10.5 0 0 1 0 -23z" fill="none" stroke="#adadad" stroke-width="1.4"/>
<circle cx="1886.8" cy="293.2" r="6.2" fill="none" stroke="#adadad" stroke-width="1.4"/>
<circle cx="1886.8" cy="293.2" r="3.4" fill="none" stroke="#adadad" stroke-width="1.1"/>
<text x="1890.4" y="308.4" font-size="11.5" fill="#8ea3bb" font-weight="bold" textLength="14" lengthAdjust="spacingAndGlyphs">2D</text>
<path d="M1878 336 c2 -1.6 4 0.4 5.6 3.6 l0.4 -13.6 c0 -2.4 3.2 -2.4 3.4 0 l0.6 -2.4 c0.4 -2.4 3.4 -2.2 3.6 0 l0.4 2.6 c0.6 -2 3.4 -1.8 3.6 0.4 l0.2 3.2 c0.8 -1.8 3.4 -1.4 3.4 0.8 c0 7.6 -1 12 -3.6 17.4 h-11.4 c-2.4 -4.2 -4.2 -8 -6.2 -12z" fill="none" stroke="#adadad" stroke-width="1.4"/>
<path d="M1876.4 356 L1893.6 373.4 M1893.6 356 L1876.4 373.4 M1876.4 360 V356 H1880.4 M1889.6 356 H1893.6 V360 M1876.4 369.4 V373.4 H1880.4" fill="none" stroke="#858585" stroke-width="1.4"/>
<circle cx="1895.6" cy="374.6" r="5.4" fill="#9a9a9a" stroke="#adadad" stroke-width="1.4"/>
<line x1="1899.6" y1="378.8" x2="1904.2" y2="383.2" stroke="#8a8a8a" stroke-width="2.6"/>
<path d="M1887.45 391.9h6.5l-3.25 3.4z" fill="#888"/>
<circle cx="1903.2" cy="410.8" r="4" fill="none" stroke="#adadad" stroke-width="1.1"/>
<path d="M1900.4 410.8 h5.6" fill="none" stroke="#adadad" stroke-width="1.1"/>
<path d="M394.6 831.2 H421.6 V940 H394.6 a3.4 3.4 0 0 1 -3.4 -3.4 V834.6 a3.4 3.4 0 0 1 3.4 -3.4z" fill="#4a505c"/>
<rect x="421.6" y="831.2" width="1103.8" height="84" fill="#b7b7b7"/>
<rect x="421.6" y="831.2" width="1103.8" height="1" fill="#8f8f8f"/>
<rect x="421.6" y="915.8" width="1103.8" height="24.2" fill="#dedede"/>
<line x1="421.6" y1="915.4" x2="1525.4" y2="915.4" stroke="#6c6c6c" stroke-width="1.2"/>
<rect x="395.8" y="837" width="1.9" height="1.9" fill="#e4e4e4"/>
<rect x="395.8" y="841" width="1.9" height="1.9" fill="#e4e4e4"/>
<rect x="399" y="837" width="1.9" height="1.9" fill="#e4e4e4"/>
<rect x="399" y="841" width="1.9" height="1.9" fill="#e4e4e4"/>
<rect x="402.2" y="837" width="1.9" height="1.9" fill="#e4e4e4"/>
<rect x="402.2" y="841" width="1.9" height="1.9" fill="#e4e4e4"/>
<rect x="405.4" y="837" width="1.9" height="1.9" fill="#e4e4e4"/>
<rect x="405.4" y="841" width="1.9" height="1.9" fill="#e4e4e4"/>
<rect x="408.6" y="837" width="1.9" height="1.9" fill="#e4e4e4"/>
<rect x="408.6" y="841" width="1.9" height="1.9" fill="#e4e4e4"/>
<rect x="411.8" y="837" width="1.9" height="1.9" fill="#e4e4e4"/>
<rect x="411.8" y="841" width="1.9" height="1.9" fill="#e4e4e4"/>
<rect x="415" y="837" width="1.9" height="1.9" fill="#e4e4e4"/>
<rect x="415" y="841" width="1.9" height="1.9" fill="#e4e4e4"/>
<path d="M398.8 853.2 l10.4 10.4 M409.2 853.2 l-10.4 10.4" fill="none" stroke="#ececec" stroke-width="2.2"/>
<line x1="397.8" y1="895.4" x2="406.6" y2="886.6" stroke="#e2e2e2" stroke-width="2.8" stroke-linecap="round"/>
<circle cx="409.2" cy="884" r="4.5" fill="#e2e2e2"/>
<path d="M409.6 883.6 L414.6 878.6" fill="none" stroke="#4a505c" stroke-width="3"/>
<text x="425.8" y="851.9" font-size="13.3" fill="#2e2e2e" font-family="'DejaVu Sans Mono', 'Liberation Mono', monospace" textLength="68.4" lengthAdjust="spacingAndGlyphs">Command:</text>
<text x="425.8" y="870.9" font-size="13.3" fill="#2e2e2e" font-family="'DejaVu Sans Mono', 'Liberation Mono', monospace" textLength="68.4" lengthAdjust="spacingAndGlyphs">Command:</text>
<text x="425.8" y="889.9" font-size="13.3" fill="#2e2e2e" font-family="'DejaVu Sans Mono', 'Liberation Mono', monospace" textLength="68.4" lengthAdjust="spacingAndGlyphs">Command:</text>
<text x="425.8" y="908.9" font-size="13.3" fill="#2e2e2e" font-family="'DejaVu Sans Mono', 'Liberation Mono', monospace" textLength="68.4" lengthAdjust="spacingAndGlyphs">Command:</text>
<rect x="427.4" y="920.8" width="19" height="13.8" fill="#e9e9e9" stroke="#767676" stroke-width="1"/>
<rect x="427.4" y="920.8" width="19" height="2.8" fill="#7c7c7c"/>
<rect x="428.6" y="921.4" width="1.2" height="1.2" fill="#f0f0f0"/>
<path d="M429.6 926.6 l3 2 l-3 2 M433.8 931.4 h3.6" fill="none" stroke="#555" stroke-width="0.9"/>
<path d="M450 926h8.4l-4.2 4.4z" fill="#606060"/>
<text x="468.4" y="932.6" font-size="13.6" fill="#727272" font-style="italic" font-family="'DejaVu Sans Mono', 'Liberation Mono', monospace" textLength="124.2" lengthAdjust="spacingAndGlyphs">Type a command</text>
<path d="M1509 931 l4.4 -5 l4.4 5z" fill="#666"/>
<path d="M86 976 L98.5 946 H146 L133.6 976z" fill="#3b4453"/>
<line x1="14.2" y1="970.4" x2="22.6" y2="951.4" stroke="#596070" stroke-width="1.2"/>
<line x1="186.2" y1="970.4" x2="194" y2="951.4" stroke="#596070" stroke-width="1.2"/>
<text x="34.2" y="966.7" font-size="15" fill="#e8e8e8" textLength="42.4" lengthAdjust="spacingAndGlyphs">Model</text>
<text x="108.2" y="966.7" font-size="15" fill="#ffffff" font-weight="bold" textLength="16.2" lengthAdjust="spacingAndGlyphs">a3</text>
<path d="M157.3 961.2 h15.4 M165 953.5 v15.4" fill="none" stroke="#f0f0f0" stroke-width="2.2"/>
<rect x="136" y="335" width="1401" height="431.8" fill="#2d3442" rx="5"/>
<path d="M171 339.6 H1530 a3 3 0 0 1 3 3 V759.4 a3 3 0 0 1 -3 3 H170 a4 4 0 0 1 -4 -4 V344.6 a5 5 0 0 1 5 -5z" fill="#3b4453"/>
<path d="M147.8 345 l8.6 8.4 M156.4 345 l-8.6 8.4" fill="none" stroke="#e2e2e2" stroke-width="2.9"/>
<rect x="146.8" y="367" width="1.6" height="12.8" fill="#d4d4d4"/>
<path d="M151.8 373.4 l5.4 -5 v10z" fill="#d4d4d4"/>
<path d="M159.01 396.28L159.01 398.52L156.37 398.43L155.91 399.55L157.83 401.35L156.25 402.93L154.45 401.01L153.33 401.47L153.42 404.11L151.18 404.11L151.27 401.47L150.15 401.01L148.35 402.93L146.77 401.35L148.69 399.55L148.23 398.43L145.59 398.52L145.59 396.28L148.23 396.37L148.69 395.25L146.77 393.45L148.35 391.87L150.15 393.79L151.27 393.33L151.18 390.69L153.42 390.69L153.33 393.33L154.45 393.79L156.25 391.87L157.83 393.45L155.91 395.25L156.37 396.37zM154.4 397.4a2.1 2.1 0 1 0 -4.2 0a2.1 2.1 0 1 0 4.2 0z" fill="#d4d4d4" fill-rule="evenodd"/>
<text transform="translate(157.4,729.9) rotate(-90)" font-size="16" fill="#d4d9e2" textLength="200.2" lengthAdjust="spacingAndGlyphs">LAYER PROPERTIES MANAGER</text>
<path d="M149 753.6 h11.4 l-6.6 5.6 h-11.4z" fill="#cfcfcf"/>
<path d="M149 749.9 h11.4 l-6.6 5.6 h-11.4z" fill="#2d3442"/>
<path d="M149 748.9 h11.4 l-6.6 5.6 h-11.4z" fill="#cfcfcf"/>
<path d="M149 745.2 h11.4 l-6.6 5.6 h-11.4z" fill="#2d3442"/>
<path d="M149 744.2 h11.4 l-6.6 5.6 h-11.4z" fill="#cfcfcf"/>
<rect x="152.6" y="751.2" width="9.6" height="12.6" fill="#f2f2f2"/>
<rect x="154.2" y="753" width="6.4" height="4" fill="#62b8f2"/>
<path d="M154.6 760.4 h5.6" fill="none" stroke="#666" stroke-width="0.8"/>
<text x="175.2" y="369.3" font-size="14.5" fill="#e6e6e6" textLength="125.8" lengthAdjust="spacingAndGlyphs">Current layer: cotas</text>
<rect x="1374" y="349.2" width="156" height="19.7" fill="#4c576c"/>
<text x="1374.6" y="365" font-size="14.5" fill="#d8dde6" textLength="102.4" lengthAdjust="spacingAndGlyphs">Search for layer</text>
<circle cx="1517.7" cy="357.4" r="5.2" fill="#707a8d" stroke="#f0f0f0" stroke-width="1.7"/>
<line x1="1521.8" y1="361.6" x2="1526.8" y2="366.4" stroke="#e8b070" stroke-width="1.7"/>
<path d="M172 381.2 h6.4 l1.6 2 h8.6 v11.6 h-16.6z" fill="#cfcfcf"/>
<path d="M180.6 391 h11.4 l-4.2 4.6 v5.4 l-3 -1.6 v-3.8z" fill="#cfcfcf" stroke="#3b4453" stroke-width="1"/>
<path d="M199.6 383.4 h6.4 l1.6 2.2 h9.6 v11.6 h-17.6z" fill="#cfcfcf"/>
<line x1="226.2" y1="380.2" x2="226.2" y2="402" stroke="#262c37" stroke-width="1.5"/>
<path d="M239.4 389.4 h10 l-4.6 4.6 h-10.2z" fill="#9a9a9a"/>
<path d="M241 381.8 h10.6 l-6.4 6.4 h-10.6z" fill="#cfcfcf"/>
<rect x="244.2" y="387.4" width="10" height="12.6" fill="#f0f0f0"/>
<rect x="246" y="389.2" width="6.4" height="4.2" fill="#4f9fe8"/>
<path d="M246.4 396.6 h5.6" fill="none" stroke="#444" stroke-width="0.9"/>
<path d="M246 396.6 l2 -1.5 v3z" fill="#444"/>
<path d="M303.2 390 h10.2 l-6.8 6.8 h-10.2z" fill="#cfcfcf"/>
<path d="M303.2 386.4 h10.2 l-6.8 6.8 h-10.2z" fill="#3b4453"/>
<path d="M303.2 385.4 h10.2 l-6.8 6.8 h-10.2z" fill="#cfcfcf"/>
<path d="M303.2 381.8 h10.2 l-6.8 6.8 h-10.2z" fill="#3b4453"/>
<path d="M303.2 380.8 h10.2 l-6.8 6.8 h-10.2z" fill="#cfcfcf"/>
<path d="M316.2 395.8L312.23 396.64L314.44 400.04L311.04 397.83L310.2 401.8L309.36 397.83L305.96 400.04L308.17 396.64L304.2 395.8L308.17 394.96L305.96 391.56L309.36 393.77L310.2 389.8L311.04 393.77L314.44 391.56L312.23 394.96z" fill="#fbd06c"/>
<path d="M330.2 390 h10.2 l-6.8 6.8 h-10.2z" fill="#cfcfcf"/>
<path d="M330.2 386.4 h10.2 l-6.8 6.8 h-10.2z" fill="#3b4453"/>
<path d="M330.2 385.4 h10.2 l-6.8 6.8 h-10.2z" fill="#cfcfcf"/>
<path d="M330.2 381.8 h10.2 l-6.8 6.8 h-10.2z" fill="#3b4453"/>
<path d="M330.2 380.8 h10.2 l-6.8 6.8 h-10.2z" fill="#cfcfcf"/>
<g transform="translate(338.3,395.8)">
<circle cx="0" cy="0" r="4.4" fill="none" stroke="#7fdbe4" stroke-width="0.9"/>
<path d="M-4.4 0 H4.4" stroke="#7fdbe4" stroke-width="0.8" transform="rotate(0)"/>
<path d="M-4.4 0 H4.4" stroke="#7fdbe4" stroke-width="0.8" transform="rotate(60)"/>
<path d="M-4.4 0 H4.4" stroke="#7fdbe4" stroke-width="0.8" transform="rotate(120)"/>
</g>
<path d="M357.2 390 h10.2 l-6.8 6.8 h-10.2z" fill="#cfcfcf"/>
<path d="M357.2 386.4 h10.2 l-6.8 6.8 h-10.2z" fill="#3b4453"/>
<path d="M357.2 385.4 h10.2 l-6.8 6.8 h-10.2z" fill="#cfcfcf"/>
<path d="M357.2 381.8 h10.2 l-6.8 6.8 h-10.2z" fill="#3b4453"/>
<path d="M357.2 380.8 h10.2 l-6.8 6.8 h-10.2z" fill="#cfcfcf"/>
<path d="M362.2 393.4 l6.6 6.6 M368.8 393.4 l-6.6 6.6" fill="none" stroke="#f0505c" stroke-width="1.8"/>
<path d="M384.4 390 h10.2 l-6.8 6.8 h-10.2z" fill="#cfcfcf"/>
<path d="M384.4 386.4 h10.2 l-6.8 6.8 h-10.2z" fill="#3b4453"/>
<path d="M384.4 385.4 h10.2 l-6.8 6.8 h-10.2z" fill="#cfcfcf"/>
<path d="M384.4 381.8 h10.2 l-6.8 6.8 h-10.2z" fill="#3b4453"/>
<path d="M384.4 380.8 h10.2 l-6.8 6.8 h-10.2z" fill="#cfcfcf"/>
<path d="M387.2 395.8 l3.1 3.2 l5.7 -5.8" fill="none" stroke="#48c878" stroke-width="1.8"/>
<path d="M1443.6 389.4 a7.6 7.6 0 0 1 13.4 -3.6" fill="none" stroke="#46cf78" stroke-width="2.5"/>
<path d="M1460.2 382 v6.8 h-6.8z" fill="#46cf78"/>
<path d="M1458.6 392.6 a7.6 7.6 0 0 1 -13.4 3.6" fill="none" stroke="#46cf78" stroke-width="2.5"/>
<path d="M1442 400 v-6.8 h6.8z" fill="#46cf78"/>
<path d="M1480.4 388.8 h6.8 l-8 9.4 h-10.4 l5 -6z" fill="#868c98"/>
<rect x="1469.4" y="382.6" width="10.4" height="9.6" fill="#dcdcdc"/>
<path d="M1515.2 388.97L1515.2 393.03L1512.08 393.15L1511.53 394.49L1513.65 396.78L1510.78 399.65L1508.49 397.53L1507.15 398.08L1507.03 401.2L1502.97 401.2L1502.85 398.08L1501.51 397.53L1499.22 399.65L1496.35 396.78L1498.47 394.49L1497.92 393.15L1494.8 393.03L1494.8 388.97L1497.92 388.85L1498.47 387.51L1496.35 385.22L1499.22 382.35L1501.51 384.47L1502.85 383.92L1502.97 380.8L1507.03 380.8L1507.15 383.92L1508.49 384.47L1510.78 382.35L1513.65 385.22L1511.53 387.51L1512.08 388.85zM1508.3 391a3.3 3.3 0 1 0 -6.6 0a3.3 3.3 0 1 0 6.6 0z" fill="#e6e6e6" fill-rule="evenodd"/>
<rect x="169.6" y="406" width="118" height="309.4" fill="none" stroke="#2c3340" stroke-width="1.2"/>
<line x1="169.6" y1="432.8" x2="287.6" y2="432.8" stroke="#2c3340" stroke-width="1.2"/>
<line x1="169.6" y1="688.6" x2="287.6" y2="688.6" stroke="#2c3340" stroke-width="1.2"/>
<text x="176.2" y="424.4" font-size="14.5" fill="#e6e6e6" textLength="39.2" lengthAdjust="spacingAndGlyphs">Filters</text>
<path d="M272.8 415 l-4.6 4.6 l4.6 4.6 M279.8 415 l-4.6 4.6 l4.6 4.6" fill="none" stroke="#dcdcdc" stroke-width="2.6"/>
<rect x="178.4" y="446.2" width="10.4" height="10.6" fill="#fbfbfb" stroke="#9a9a9a" stroke-width="1"/>
<line x1="180.8" y1="451.5" x2="186.6" y2="451.5" stroke="#1b2a8a" stroke-width="1.4"/>
<path d="M190 451.5 H198" fill="none" stroke="#c8c8c8" stroke-width="1" stroke-dasharray="1 1" shape-rendering="crispEdges"/>
<path d="M204.6 450.8 h7.6 l-4.8 5 h-7.6z" fill="#cfcfcf"/>
<path d="M204.6 447.9 h7.6 l-4.8 5 h-7.6z" fill="#3b4453"/>
<path d="M204.6 446.9 h7.6 l-4.8 5 h-7.6z" fill="#cfcfcf"/>
<path d="M204.6 444 h7.6 l-4.8 5 h-7.6z" fill="#3b4453"/>
<path d="M204.6 443 h7.6 l-4.8 5 h-7.6z" fill="#cfcfcf"/>
<path d="M207.4 453.8 l2.6 2.7 l4.2 -4.7" fill="none" stroke="#3fd068" stroke-width="1.8"/>
<rect x="220" y="439" width="22.2" height="22.2" fill="#6f84aa"/>
<text x="222" y="455.4" font-size="14.8" fill="#ffffff" textLength="16.6" lengthAdjust="spacingAndGlyphs">All</text>
<path d="M207.5 461.5 V473.5 H220" fill="none" stroke="#c8c8c8" stroke-width="1" stroke-dasharray="1 1" shape-rendering="crispEdges"/>
<path d="M223 465 h5.6 l1.6 2 h7.8 v10 h-15z" fill="#d4d4d4"/>
<path d="M230.6 472.6 h8.6 l-3.2 3.4 v3.8 l-2.2 -1.2 v-2.6z" fill="#bdbdbd" stroke="#3b4453" stroke-width="0.8"/>
<clipPath id="fc"><rect x="170" y="434" width="117" height="250"/></clipPath>
<g clip-path="url(#fc)">
<text x="245.8" y="478" font-size="14.6" fill="#e6e6e6">All Used Layers</text>
</g>
<rect x="171.4" y="666.6" width="114.4" height="18.4" fill="#f2f2f2" stroke="#c8c8c8" stroke-width="1"/>
<rect x="190.6" y="675" width="48.8" height="2.4" fill="#9c9c9c"/>
<rect x="176.6" y="694.2" width="13.2" height="13.4" fill="#ffffff" stroke="#9a9a9a" stroke-width="0.8" rx="2"/>
<text x="195" y="705.4" font-size="14.5" fill="#e6e6e6" textLength="56.8" lengthAdjust="spacingAndGlyphs">Invert fil</text>
<path d="M272.8 697.2 l-4.6 4.6 l4.6 4.6 M279.8 697.2 l-4.6 4.6 l4.6 4.6" fill="none" stroke="#dcdcdc" stroke-width="2.6"/>
<rect x="292.8" y="405" width="1236.6" height="29" fill="#464f62"/>
<rect x="292.8" y="434" width="1236.6" height="261" fill="#3b4453"/>
<rect x="292.8" y="457" width="1236.6" height="23" fill="#7185a8"/>
<rect x="407.2" y="405" width="2.8" height="290" fill="#2c3340"/>
<rect x="314.4" y="405" width="1.3" height="29" fill="#363e4d"/>
<rect x="432" y="405" width="1.3" height="29" fill="#363e4d"/>
<rect x="455" y="405" width="1.3" height="29" fill="#363e4d"/>
<rect x="649.4" y="405" width="1.3" height="29" fill="#363e4d"/>
<rect x="673.4" y="405" width="1.3" height="29" fill="#363e4d"/>
<rect x="696.4" y="405" width="1.3" height="29" fill="#363e4d"/>
<rect x="755.9" y="405" width="1.3" height="29" fill="#363e4d"/>
<rect x="815.4" y="405" width="1.3" height="29" fill="#363e4d"/>
<rect x="895.4" y="405" width="1.3" height="29" fill="#363e4d"/>
<rect x="975.9" y="405" width="1.3" height="29" fill="#363e4d"/>
<rect x="1060.4" y="405" width="1.3" height="29" fill="#363e4d"/>
<rect x="1146.4" y="405" width="1.3" height="29" fill="#363e4d"/>
<rect x="1213.9" y="405" width="1.3" height="29" fill="#363e4d"/>
<rect x="1282" y="405" width="1.3" height="29" fill="#363e4d"/>
<rect x="1305.1" y="405" width="1.3" height="29" fill="#363e4d"/>
<text x="298.4" y="424.8" font-size="14.5" fill="#e6e6e6" textLength="15.6" lengthAdjust="spacingAndGlyphs">S...</text>
<text x="321.2" y="424.8" font-size="14.5" fill="#e6e6e6" textLength="40" lengthAdjust="spacingAndGlyphs">Name</text>
<text x="415.2" y="424.8" font-size="14.5" fill="#e6e6e6" textLength="15.8" lengthAdjust="spacingAndGlyphs">O..</text>
<text x="438.2" y="424.8" font-size="14.5" fill="#e6e6e6" textLength="15.2" lengthAdjust="spacingAndGlyphs">F...</text>
<text x="461" y="424.8" font-size="14.5" fill="#e6e6e6" textLength="63.8" lengthAdjust="spacingAndGlyphs">VP Freeze</text>
<text x="656.6" y="424.8" font-size="14.5" fill="#e6e6e6" textLength="14.6" lengthAdjust="spacingAndGlyphs">L...</text>
<text x="679.6" y="424.8" font-size="14.5" fill="#e6e6e6" textLength="15.4" lengthAdjust="spacingAndGlyphs">P...</text>
<text x="702.2" y="424.8" font-size="14.5" fill="#e6e6e6" textLength="35.4" lengthAdjust="spacingAndGlyphs">Color</text>
<text x="762.8" y="424.8" font-size="14.5" fill="#e6e6e6" textLength="46.4" lengthAdjust="spacingAndGlyphs">VP Co...</text>
<text x="822" y="424.8" font-size="14.5" fill="#e6e6e6" textLength="55.8" lengthAdjust="spacingAndGlyphs">Linetype</text>
<text x="902" y="424.8" font-size="14.5" fill="#e6e6e6" textLength="62" lengthAdjust="spacingAndGlyphs">VP Linet...</text>
<text x="981.8" y="424.8" font-size="14.5" fill="#e6e6e6" textLength="71.8" lengthAdjust="spacingAndGlyphs">Lineweight</text>
<text x="1067.6" y="424.8" font-size="14.5" fill="#e6e6e6" textLength="67.8" lengthAdjust="spacingAndGlyphs">VP Linew...</text>
<text x="1152" y="424.8" font-size="14.5" fill="#e6e6e6" textLength="52" lengthAdjust="spacingAndGlyphs">Transp...</text>
<text x="1220.4" y="424.8" font-size="14.5" fill="#e6e6e6" textLength="50" lengthAdjust="spacingAndGlyphs">VP Tra...</text>
<text x="1288.8" y="424.8" font-size="14.5" fill="#e6e6e6" textLength="14.8" lengthAdjust="spacingAndGlyphs">N..</text>
<text x="1311.4" y="424.8" font-size="14.5" fill="#e6e6e6" textLength="75.2" lengthAdjust="spacingAndGlyphs">Description</text>
<path d="M397 422.6 l4.2 -4.6 l4.2 4.6z" fill="#e6e6e6"/>
<path d="M301.6 441.3 h10.8 l-5.8 7.2 h-10.9z" fill="#7ec8fa"/>
<text x="320.2" y="450.6" font-size="14.5" fill="#e6e6e6" textLength="8" lengthAdjust="spacingAndGlyphs">0</text>
<circle cx="420.6" cy="443.7" r="5.6" fill="#fbd06c"/>
<path d="M418.14 448.45 h4.92 v2.04 a2.46 1.87 0 0 1 -4.92 0z" fill="#f4f4f4"/>
<circle cx="443.4" cy="445.1" r="4.2" fill="#fbd06c"/>
<path d="M448.9 445.1L451.6 445.1M447.29 448.99L449.2 450.9M443.4 450.6L443.4 453.3M439.51 448.99L437.6 450.9M437.9 445.1L435.2 445.1M439.51 441.21L437.6 439.3M443.4 439.6L443.4 436.9M447.29 441.21L449.2 439.3" fill="none" stroke="#fbd06c" stroke-width="1.2"/>
<g transform="translate(545.6,438.1)">
<g transform="scale(0.78)">
<rect x="1.5" y="1.5" width="12" height="12" fill="#69727f" opacity="0.55"/>
<path d="M0 4 V0 H4 M11 0 H15.5 V4 M0 11 V15.5 H4" fill="none" stroke="#b9bec8" stroke-width="1.4"/>
<path d="M3 3.4 H12.2 V8 M3 3.4 V12.4 H7.5" fill="none" stroke="#b9bec8" stroke-width="1"/>
</g>
<circle cx="10.14" cy="10.14" r="1.95" fill="#fbd06c"/>
<path d="M13.39 10.14L13.96 10.14M12.44 12.44L12.84 12.84M10.14 13.39L10.14 13.96M7.84 12.44L7.44 12.84M6.89 10.14L6.32 10.14M7.84 7.84L7.44 7.44M10.14 6.89L10.14 6.32M12.44 7.84L12.84 7.44" fill="none" stroke="#fbd06c" stroke-width="0.78"/>
</g>
<rect x="654.2" y="443.3" width="10.8" height="8.63" fill="#fbd06c"/>
<path d="M660.9 443.7 v-2.66 a2.66 2.66 0 0 1 5.33 0 v1.18" fill="none" stroke="#fbd06c" stroke-width="1.48"/>
<rect x="659.01" y="445.89" width="1.18" height="3.62" fill="#6a5a2a"/>
<rect x="680.2" y="438.5" width="8.4" height="4.4" fill="#f6f6f6"/>
<path d="M677.8 442.1 h13.2 a0.8 0.8 0 0 1 0.8 0.8 v6.4 h-14.8 v-6.4 a0.8 0.8 0 0 1 0.8 -0.8z" fill="#ededed"/>
<rect x="679.6" y="446.7" width="9.6" height="5.6" fill="#fafafa"/>
<rect x="680.6" y="447.9" width="7.6" height="3.4" fill="#6bbcf2"/>
<rect x="700.8" y="438.3" width="13.8" height="13.8" fill="#000000" stroke="#ececec" stroke-width="1.2"/>
<text x="719.8" y="450.6" font-size="14.5" fill="#e6e6e6" textLength="29.6" lengthAdjust="spacingAndGlyphs">wh...</text>
<rect x="760.6" y="438.3" width="13.8" height="13.8" fill="#000000" stroke="#ececec" stroke-width="1.2"/>
<text x="779.2" y="450.6" font-size="14.5" fill="#e6e6e6" textLength="29.6" lengthAdjust="spacingAndGlyphs">wh...</text>
<text x="820.4" y="450.6" font-size="14.5" fill="#e6e6e6" textLength="65" lengthAdjust="spacingAndGlyphs">Continu...</text>
<text x="900.2" y="450.6" font-size="14.5" fill="#e6e6e6" textLength="65" lengthAdjust="spacingAndGlyphs">Continu...</text>
<line x1="978.2" y1="445.7" x2="1004.8" y2="445.7" stroke="#e6e6e6" stroke-width="1.2"/>
<text x="1011.4" y="450.6" font-size="14.5" fill="#e6e6e6" textLength="42.2" lengthAdjust="spacingAndGlyphs">Defa...</text>
<line x1="1063.2" y1="445.7" x2="1089.8" y2="445.7" stroke="#e6e6e6" stroke-width="1.2"/>
<text x="1096.4" y="450.6" font-size="14.5" fill="#e6e6e6" textLength="42" lengthAdjust="spacingAndGlyphs">Defa...</text>
<text x="1150.8" y="450.6" font-size="14.5" fill="#e6e6e6" textLength="8.6" lengthAdjust="spacingAndGlyphs">0</text>
<text x="1218.4" y="450.6" font-size="14.5" fill="#e6e6e6" textLength="8.6" lengthAdjust="spacingAndGlyphs">0</text>
<g transform="translate(1286.6,438.1)">
<g transform="scale(0.78)">
<rect x="1.5" y="1.5" width="12" height="12" fill="#69727f" opacity="0.55"/>
<path d="M0 4 V0 H4 M11 0 H15.5 V4 M0 11 V15.5 H4" fill="none" stroke="#b9bec8" stroke-width="1.4"/>
<path d="M3 3.4 H12.2 V8 M3 3.4 V12.4 H7.5" fill="none" stroke="#b9bec8" stroke-width="1"/>
</g>
<circle cx="10.14" cy="10.14" r="1.95" fill="#fbd06c"/>
<path d="M13.39 10.14L13.96 10.14M12.44 12.44L12.84 12.84M10.14 13.39L10.14 13.96M7.84 12.44L7.44 12.84M6.89 10.14L6.32 10.14M7.84 7.84L7.44 7.44M10.14 6.89L10.14 6.32M12.44 7.84L12.84 7.44" fill="none" stroke="#fbd06c" stroke-width="0.78"/>
</g>
<path d="M297.6 468.7 l4.2 4.4 l8.6 -9.6" fill="none" stroke="#3fd06c" stroke-width="2.3"/>
<text x="320.2" y="473.6" font-size="14.5" fill="#e6e6e6" textLength="34.6" lengthAdjust="spacingAndGlyphs">cotas</text>
<circle cx="420.6" cy="466.7" r="5.6" fill="#fbd06c"/>
<path d="M418.14 471.45 h4.92 v2.04 a2.46 1.87 0 0 1 -4.92 0z" fill="#f4f4f4"/>
<circle cx="443.4" cy="468.1" r="4.2" fill="#fbd06c"/>
<path d="M448.9 468.1L451.6 468.1M447.29 471.99L449.2 473.9M443.4 473.6L443.4 476.3M439.51 471.99L437.6 473.9M437.9 468.1L435.2 468.1M439.51 464.21L437.6 462.3M443.4 462.6L443.4 459.9M447.29 464.21L449.2 462.3" fill="none" stroke="#fbd06c" stroke-width="1.2"/>
<g transform="translate(545.6,461.1)">
<g transform="scale(0.78)">
<rect x="1.5" y="1.5" width="12" height="12" fill="#69727f" opacity="0.55"/>
<path d="M0 4 V0 H4 M11 0 H15.5 V4 M0 11 V15.5 H4" fill="none" stroke="#b9bec8" stroke-width="1.4"/>
<path d="M3 3.4 H12.2 V8 M3 3.4 V12.4 H7.5" fill="none" stroke="#b9bec8" stroke-width="1"/>
</g>
<circle cx="10.14" cy="10.14" r="1.95" fill="#fbd06c"/>
<path d="M13.39 10.14L13.96 10.14M12.44 12.44L12.84 12.84M10.14 13.39L10.14 13.96M7.84 12.44L7.44 12.84M6.89 10.14L6.32 10.14M7.84 7.84L7.44 7.44M10.14 6.89L10.14 6.32M12.44 7.84L12.84 7.44" fill="none" stroke="#fbd06c" stroke-width="0.78"/>
</g>
<rect x="654.2" y="466.3" width="10.8" height="8.63" fill="#fbd06c"/>
<path d="M660.9 466.7 v-2.66 a2.66 2.66 0 0 1 5.33 0 v1.18" fill="none" stroke="#fbd06c" stroke-width="1.48"/>
<rect x="659.01" y="468.89" width="1.18" height="3.62" fill="#6a5a2a"/>
<rect x="680.2" y="461.5" width="8.4" height="4.4" fill="#f6f6f6"/>
<path d="M677.8 465.1 h13.2 a0.8 0.8 0 0 1 0.8 0.8 v6.4 h-14.8 v-6.4 a0.8 0.8 0 0 1 0.8 -0.8z" fill="#ededed"/>
<rect x="679.6" y="469.7" width="9.6" height="5.6" fill="#fafafa"/>
<rect x="680.6" y="470.9" width="7.6" height="3.4" fill="#6bbcf2"/>
<rect x="700.8" y="461.3" width="13.8" height="13.8" fill="#2a2a2a" stroke="#ececec" stroke-width="1.2"/>
<text x="719.8" y="473.6" font-size="14.5" fill="#e6e6e6" textLength="23" lengthAdjust="spacingAndGlyphs">251</text>
<rect x="760.6" y="461.3" width="13.8" height="13.8" fill="#2a2a2a" stroke="#ececec" stroke-width="1.2"/>
<text x="779.2" y="473.6" font-size="14.5" fill="#e6e6e6" textLength="23" lengthAdjust="spacingAndGlyphs">251</text>
<text x="820.4" y="473.6" font-size="14.5" fill="#e6e6e6" textLength="65" lengthAdjust="spacingAndGlyphs">Continu...</text>
<text x="900.2" y="473.6" font-size="14.5" fill="#e6e6e6" textLength="65" lengthAdjust="spacingAndGlyphs">Continu...</text>
<line x1="978.2" y1="468.7" x2="1004.8" y2="468.7" stroke="#e6e6e6" stroke-width="1.2"/>
<text x="1011.4" y="473.6" font-size="14.5" fill="#e6e6e6" textLength="42.2" lengthAdjust="spacingAndGlyphs">Defa...</text>
<line x1="1063.2" y1="468.7" x2="1089.8" y2="468.7" stroke="#e6e6e6" stroke-width="1.2"/>
<text x="1096.4" y="473.6" font-size="14.5" fill="#e6e6e6" textLength="42" lengthAdjust="spacingAndGlyphs">Defa...</text>
<text x="1150.8" y="473.6" font-size="14.5" fill="#e6e6e6" textLength="8.6" lengthAdjust="spacingAndGlyphs">0</text>
<text x="1218.4" y="473.6" font-size="14.5" fill="#e6e6e6" textLength="8.6" lengthAdjust="spacingAndGlyphs">0</text>
<g transform="translate(1286.6,461.1)">
<g transform="scale(0.78)">
<rect x="1.5" y="1.5" width="12" height="12" fill="#69727f" opacity="0.55"/>
<path d="M0 4 V0 H4 M11 0 H15.5 V4 M0 11 V15.5 H4" fill="none" stroke="#b9bec8" stroke-width="1.4"/>
<path d="M3 3.4 H12.2 V8 M3 3.4 V12.4 H7.5" fill="none" stroke="#b9bec8" stroke-width="1"/>
</g>
<circle cx="10.14" cy="10.14" r="1.95" fill="#fbd06c"/>
<path d="M13.39 10.14L13.96 10.14M12.44 12.44L12.84 12.84M10.14 13.39L10.14 13.96M7.84 12.44L7.44 12.84M6.89 10.14L6.32 10.14M7.84 7.84L7.44 7.44M10.14 6.89L10.14 6.32M12.44 7.84L12.84 7.44" fill="none" stroke="#fbd06c" stroke-width="0.78"/>
</g>
<path d="M301.6 487.3 h10.8 l-5.8 7.2 h-10.9z" fill="#7ec8fa"/>
<text x="320.2" y="496.6" font-size="14.5" fill="#e6e6e6" textLength="44.4" lengthAdjust="spacingAndGlyphs">circulo</text>
<circle cx="420.6" cy="489.7" r="5.6" fill="#fbd06c"/>
<path d="M418.14 494.45 h4.92 v2.04 a2.46 1.87 0 0 1 -4.92 0z" fill="#f4f4f4"/>
<circle cx="443.4" cy="491.1" r="4.2" fill="#fbd06c"/>
<path d="M448.9 491.1L451.6 491.1M447.29 494.99L449.2 496.9M443.4 496.6L443.4 499.3M439.51 494.99L437.6 496.9M437.9 491.1L435.2 491.1M439.51 487.21L437.6 485.3M443.4 485.6L443.4 482.9M447.29 487.21L449.2 485.3" fill="none" stroke="#fbd06c" stroke-width="1.2"/>
<g transform="translate(545.6,484.1)">
<g transform="scale(0.78)">
<rect x="1.5" y="1.5" width="12" height="12" fill="#69727f" opacity="0.55"/>
<path d="M0 4 V0 H4 M11 0 H15.5 V4 M0 11 V15.5 H4" fill="none" stroke="#b9bec8" stroke-width="1.4"/>
<path d="M3 3.4 H12.2 V8 M3 3.4 V12.4 H7.5" fill="none" stroke="#b9bec8" stroke-width="1"/>
</g>
<circle cx="10.14" cy="10.14" r="1.95" fill="#fbd06c"/>
<path d="M13.39 10.14L13.96 10.14M12.44 12.44L12.84 12.84M10.14 13.39L10.14 13.96M7.84 12.44L7.44 12.84M6.89 10.14L6.32 10.14M7.84 7.84L7.44 7.44M10.14 6.89L10.14 6.32M12.44 7.84L12.84 7.44" fill="none" stroke="#fbd06c" stroke-width="0.78"/>
</g>
<rect x="654.2" y="489.3" width="10.8" height="8.63" fill="#fbd06c"/>
<path d="M660.9 489.7 v-2.66 a2.66 2.66 0 0 1 5.33 0 v1.18" fill="none" stroke="#fbd06c" stroke-width="1.48"/>
<rect x="659.01" y="491.89" width="1.18" height="3.62" fill="#6a5a2a"/>
<rect x="680.2" y="484.5" width="8.4" height="4.4" fill="#f6f6f6"/>
<path d="M677.8 488.1 h13.2 a0.8 0.8 0 0 1 0.8 0.8 v6.4 h-14.8 v-6.4 a0.8 0.8 0 0 1 0.8 -0.8z" fill="#ededed"/>
<rect x="679.6" y="492.7" width="9.6" height="5.6" fill="#fafafa"/>
<rect x="680.6" y="493.9" width="7.6" height="3.4" fill="#6bbcf2"/>
<rect x="700.8" y="484.3" width="13.8" height="13.8" fill="#ffff00" stroke="#ececec" stroke-width="1.2"/>
<text x="719.8" y="496.6" font-size="14.5" fill="#e6e6e6" textLength="29.8" lengthAdjust="spacingAndGlyphs">yel...</text>
<rect x="760.6" y="484.3" width="13.8" height="13.8" fill="#ffff00" stroke="#ececec" stroke-width="1.2"/>
<text x="779.2" y="496.6" font-size="14.5" fill="#e6e6e6" textLength="29.8" lengthAdjust="spacingAndGlyphs">yel...</text>
<text x="820.4" y="496.6" font-size="14.5" fill="#e6e6e6" textLength="65" lengthAdjust="spacingAndGlyphs">Continu...</text>
<text x="900.2" y="496.6" font-size="14.5" fill="#e6e6e6" textLength="65" lengthAdjust="spacingAndGlyphs">Continu...</text>
<line x1="978.2" y1="491.7" x2="1004.8" y2="491.7" stroke="#e6e6e6" stroke-width="1.2"/>
<text x="1011.4" y="496.6" font-size="14.5" fill="#e6e6e6" textLength="42.2" lengthAdjust="spacingAndGlyphs">Defa...</text>
<line x1="1063.2" y1="491.7" x2="1089.8" y2="491.7" stroke="#e6e6e6" stroke-width="1.2"/>
<text x="1096.4" y="496.6" font-size="14.5" fill="#e6e6e6" textLength="42" lengthAdjust="spacingAndGlyphs">Defa...</text>
<text x="1150.8" y="496.6" font-size="14.5" fill="#e6e6e6" textLength="8.6" lengthAdjust="spacingAndGlyphs">0</text>
<text x="1218.4" y="496.6" font-size="14.5" fill="#e6e6e6" textLength="8.6" lengthAdjust="spacingAndGlyphs">0</text>
<g transform="translate(1286.6,484.1)">
<g transform="scale(0.78)">
<rect x="1.5" y="1.5" width="12" height="12" fill="#69727f" opacity="0.55"/>
<path d="M0 4 V0 H4 M11 0 H15.5 V4 M0 11 V15.5 H4" fill="none" stroke="#b9bec8" stroke-width="1.4"/>
<path d="M3 3.4 H12.2 V8 M3 3.4 V12.4 H7.5" fill="none" stroke="#b9bec8" stroke-width="1"/>
</g>
<circle cx="10.14" cy="10.14" r="1.95" fill="#fbd06c"/>
<path d="M13.39 10.14L13.96 10.14M12.44 12.44L12.84 12.84M10.14 13.39L10.14 13.96M7.84 12.44L7.44 12.84M6.89 10.14L6.32 10.14M7.84 7.84L7.44 7.44M10.14 6.89L10.14 6.32M12.44 7.84L12.84 7.44" fill="none" stroke="#fbd06c" stroke-width="0.78"/>
</g>
<path d="M301.6 510.3 h10.8 l-5.8 7.2 h-10.9z" fill="#7ec8fa"/>
<text x="320.2" y="519.6" font-size="14.5" fill="#e6e6e6" textLength="65.2" lengthAdjust="spacingAndGlyphs">esquadria</text>
<circle cx="420.6" cy="512.7" r="5.6" fill="#fbd06c"/>
<path d="M418.14 517.45 h4.92 v2.04 a2.46 1.87 0 0 1 -4.92 0z" fill="#f4f4f4"/>
<circle cx="443.4" cy="514.1" r="4.2" fill="#fbd06c"/>
<path d="M448.9 514.1L451.6 514.1M447.29 517.99L449.2 519.9M443.4 519.6L443.4 522.3M439.51 517.99L437.6 519.9M437.9 514.1L435.2 514.1M439.51 510.21L437.6 508.3M443.4 508.6L443.4 505.9M447.29 510.21L449.2 508.3" fill="none" stroke="#fbd06c" stroke-width="1.2"/>
<g transform="translate(545.6,507.1)">
<g transform="scale(0.78)">
<rect x="1.5" y="1.5" width="12" height="12" fill="#69727f" opacity="0.55"/>
<path d="M0 4 V0 H4 M11 0 H15.5 V4 M0 11 V15.5 H4" fill="none" stroke="#b9bec8" stroke-width="1.4"/>
<path d="M3 3.4 H12.2 V8 M3 3.4 V12.4 H7.5" fill="none" stroke="#b9bec8" stroke-width="1"/>
</g>
<circle cx="10.14" cy="10.14" r="1.95" fill="#fbd06c"/>
<path d="M13.39 10.14L13.96 10.14M12.44 12.44L12.84 12.84M10.14 13.39L10.14 13.96M7.84 12.44L7.44 12.84M6.89 10.14L6.32 10.14M7.84 7.84L7.44 7.44M10.14 6.89L10.14 6.32M12.44 7.84L12.84 7.44" fill="none" stroke="#fbd06c" stroke-width="0.78"/>
</g>
<rect x="654.2" y="512.3" width="10.8" height="8.63" fill="#fbd06c"/>
<path d="M660.9 512.7 v-2.66 a2.66 2.66 0 0 1 5.33 0 v1.18" fill="none" stroke="#fbd06c" stroke-width="1.48"/>
<rect x="659.01" y="514.89" width="1.18" height="3.62" fill="#6a5a2a"/>
<rect x="680.2" y="507.5" width="8.4" height="4.4" fill="#f6f6f6"/>
<path d="M677.8 511.1 h13.2 a0.8 0.8 0 0 1 0.8 0.8 v6.4 h-14.8 v-6.4 a0.8 0.8 0 0 1 0.8 -0.8z" fill="#ededed"/>
<rect x="679.6" y="515.7" width="9.6" height="5.6" fill="#fafafa"/>
<rect x="680.6" y="516.9" width="7.6" height="3.4" fill="#6bbcf2"/>
<rect x="700.8" y="507.3" width="13.8" height="13.8" fill="#2a2a2a" stroke="#ececec" stroke-width="1.2"/>
<text x="719.8" y="519.6" font-size="14.5" fill="#e6e6e6" textLength="23" lengthAdjust="spacingAndGlyphs">251</text>
<rect x="760.6" y="507.3" width="13.8" height="13.8" fill="#2a2a2a" stroke="#ececec" stroke-width="1.2"/>
<text x="779.2" y="519.6" font-size="14.5" fill="#e6e6e6" textLength="23" lengthAdjust="spacingAndGlyphs">251</text>
<text x="820.4" y="519.6" font-size="14.5" fill="#e6e6e6" textLength="65" lengthAdjust="spacingAndGlyphs">Continu...</text>
<text x="900.2" y="519.6" font-size="14.5" fill="#e6e6e6" textLength="65" lengthAdjust="spacingAndGlyphs">Continu...</text>
<line x1="978.2" y1="514.7" x2="1004.8" y2="514.7" stroke="#e6e6e6" stroke-width="1.2"/>
<text x="1011.4" y="519.6" font-size="14.5" fill="#e6e6e6" textLength="42.2" lengthAdjust="spacingAndGlyphs">Defa...</text>
<line x1="1063.2" y1="514.7" x2="1089.8" y2="514.7" stroke="#e6e6e6" stroke-width="1.2"/>
<text x="1096.4" y="519.6" font-size="14.5" fill="#e6e6e6" textLength="42" lengthAdjust="spacingAndGlyphs">Defa...</text>
<text x="1150.8" y="519.6" font-size="14.5" fill="#e6e6e6" textLength="8.6" lengthAdjust="spacingAndGlyphs">0</text>
<text x="1218.4" y="519.6" font-size="14.5" fill="#e6e6e6" textLength="8.6" lengthAdjust="spacingAndGlyphs">0</text>
<g transform="translate(1286.6,507.1)">
<g transform="scale(0.78)">
<rect x="1.5" y="1.5" width="12" height="12" fill="#69727f" opacity="0.55"/>
<path d="M0 4 V0 H4 M11 0 H15.5 V4 M0 11 V15.5 H4" fill="none" stroke="#b9bec8" stroke-width="1.4"/>
<path d="M3 3.4 H12.2 V8 M3 3.4 V12.4 H7.5" fill="none" stroke="#b9bec8" stroke-width="1"/>
</g>
<circle cx="10.14" cy="10.14" r="1.95" fill="#fbd06c"/>
<path d="M13.39 10.14L13.96 10.14M12.44 12.44L12.84 12.84M10.14 13.39L10.14 13.96M7.84 12.44L7.44 12.84M6.89 10.14L6.32 10.14M7.84 7.84L7.44 7.44M10.14 6.89L10.14 6.32M12.44 7.84L12.84 7.44" fill="none" stroke="#fbd06c" stroke-width="0.78"/>
</g>
<path d="M301.6 533.3 h10.8 l-5.8 7.2 h-10.9z" fill="#7ec8fa"/>
<text x="319.2" y="542.6" font-size="14.5" fill="#e6e6e6" textLength="48" lengthAdjust="spacingAndGlyphs">janelas</text>
<circle cx="420.6" cy="535.7" r="5.6" fill="#fbd06c"/>
<path d="M418.14 540.45 h4.92 v2.04 a2.46 1.87 0 0 1 -4.92 0z" fill="#f4f4f4"/>
<circle cx="443.4" cy="537.1" r="4.2" fill="#fbd06c"/>
<path d="M448.9 537.1L451.6 537.1M447.29 540.99L449.2 542.9M443.4 542.6L443.4 545.3M439.51 540.99L437.6 542.9M437.9 537.1L435.2 537.1M439.51 533.21L437.6 531.3M443.4 531.6L443.4 528.9M447.29 533.21L449.2 531.3" fill="none" stroke="#fbd06c" stroke-width="1.2"/>
<g transform="translate(545.6,530.1)">
<g transform="scale(0.78)">
<rect x="1.5" y="1.5" width="12" height="12" fill="#69727f" opacity="0.55"/>
<path d="M0 4 V0 H4 M11 0 H15.5 V4 M0 11 V15.5 H4" fill="none" stroke="#b9bec8" stroke-width="1.4"/>
<path d="M3 3.4 H12.2 V8 M3 3.4 V12.4 H7.5" fill="none" stroke="#b9bec8" stroke-width="1"/>
</g>
<circle cx="10.14" cy="10.14" r="1.95" fill="#fbd06c"/>
<path d="M13.39 10.14L13.96 10.14M12.44 12.44L12.84 12.84M10.14 13.39L10.14 13.96M7.84 12.44L7.44 12.84M6.89 10.14L6.32 10.14M7.84 7.84L7.44 7.44M10.14 6.89L10.14 6.32M12.44 7.84L12.84 7.44" fill="none" stroke="#fbd06c" stroke-width="0.78"/>
</g>
<rect x="654.2" y="535.3" width="10.8" height="8.63" fill="#fbd06c"/>
<path d="M660.9 535.7 v-2.66 a2.66 2.66 0 0 1 5.33 0 v1.18" fill="none" stroke="#fbd06c" stroke-width="1.48"/>
<rect x="659.01" y="537.89" width="1.18" height="3.62" fill="#6a5a2a"/>
<rect x="680.2" y="530.5" width="8.4" height="4.4" fill="#f6f6f6"/>
<path d="M677.8 534.1 h13.2 a0.8 0.8 0 0 1 0.8 0.8 v6.4 h-14.8 v-6.4 a0.8 0.8 0 0 1 0.8 -0.8z" fill="#ededed"/>
<rect x="679.6" y="538.7" width="9.6" height="5.6" fill="#fafafa"/>
<rect x="680.6" y="539.9" width="7.6" height="3.4" fill="#6bbcf2"/>
<circle cx="688.6" cy="541.1" r="4.4" fill="#ef4a55"/>
<rect x="686" y="540.4" width="5.2" height="1.5" fill="#ffffff"/>
<rect x="700.8" y="530.3" width="13.8" height="13.8" fill="#ff7f00" stroke="#ececec" stroke-width="1.2"/>
<text x="719.8" y="542.6" font-size="14.5" fill="#e6e6e6" textLength="15.6" lengthAdjust="spacingAndGlyphs">30</text>
<rect x="760.6" y="530.3" width="13.8" height="13.8" fill="#ff7f00" stroke="#ececec" stroke-width="1.2"/>
<text x="779.2" y="542.6" font-size="14.5" fill="#e6e6e6" textLength="15.6" lengthAdjust="spacingAndGlyphs">30</text>
<text x="820.4" y="542.6" font-size="14.5" fill="#e6e6e6" textLength="65" lengthAdjust="spacingAndGlyphs">Continu...</text>
<text x="900.2" y="542.6" font-size="14.5" fill="#e6e6e6" textLength="65" lengthAdjust="spacingAndGlyphs">Continu...</text>
<line x1="978.2" y1="537.7" x2="1004.8" y2="537.7" stroke="#e6e6e6" stroke-width="1.2"/>
<text x="1011.4" y="542.6" font-size="14.5" fill="#e6e6e6" textLength="42.2" lengthAdjust="spacingAndGlyphs">Defa...</text>
<line x1="1063.2" y1="537.7" x2="1089.8" y2="537.7" stroke="#e6e6e6" stroke-width="1.2"/>
<text x="1096.4" y="542.6" font-size="14.5" fill="#e6e6e6" textLength="42" lengthAdjust="spacingAndGlyphs">Defa...</text>
<text x="1150.8" y="542.6" font-size="14.5" fill="#e6e6e6" textLength="8.6" lengthAdjust="spacingAndGlyphs">0</text>
<text x="1218.4" y="542.6" font-size="14.5" fill="#e6e6e6" textLength="8.6" lengthAdjust="spacingAndGlyphs">0</text>
<g transform="translate(1286.6,530.1)">
<g transform="scale(0.78)">
<rect x="1.5" y="1.5" width="12" height="12" fill="#69727f" opacity="0.55"/>
<path d="M0 4 V0 H4 M11 0 H15.5 V4 M0 11 V15.5 H4" fill="none" stroke="#b9bec8" stroke-width="1.4"/>
<path d="M3 3.4 H12.2 V8 M3 3.4 V12.4 H7.5" fill="none" stroke="#b9bec8" stroke-width="1"/>
</g>
<circle cx="10.14" cy="10.14" r="1.95" fill="#fbd06c"/>
<path d="M13.39 10.14L13.96 10.14M12.44 12.44L12.84 12.84M10.14 13.39L10.14 13.96M7.84 12.44L7.44 12.84M6.89 10.14L6.32 10.14M7.84 7.84L7.44 7.44M10.14 6.89L10.14 6.32M12.44 7.84L12.84 7.44" fill="none" stroke="#fbd06c" stroke-width="0.78"/>
</g>
<path d="M301.6 556.3 h10.8 l-5.8 7.2 h-10.9z" fill="#7ec8fa"/>
<text x="320.2" y="565.6" font-size="14.5" fill="#e6e6e6" textLength="54.2" lengthAdjust="spacingAndGlyphs">legenda</text>
<circle cx="420.6" cy="558.7" r="5.6" fill="#fbd06c"/>
<path d="M418.14 563.45 h4.92 v2.04 a2.46 1.87 0 0 1 -4.92 0z" fill="#f4f4f4"/>
<circle cx="443.4" cy="560.1" r="4.2" fill="#fbd06c"/>
<path d="M448.9 560.1L451.6 560.1M447.29 563.99L449.2 565.9M443.4 565.6L443.4 568.3M439.51 563.99L437.6 565.9M437.9 560.1L435.2 560.1M439.51 556.21L437.6 554.3M443.4 554.6L443.4 551.9M447.29 556.21L449.2 554.3" fill="none" stroke="#fbd06c" stroke-width="1.2"/>
<g transform="translate(545.6,553.1)">
<g transform="scale(0.78)">
<rect x="1.5" y="1.5" width="12" height="12" fill="#69727f" opacity="0.55"/>
<path d="M0 4 V0 H4 M11 0 H15.5 V4 M0 11 V15.5 H4" fill="none" stroke="#b9bec8" stroke-width="1.4"/>
<path d="M3 3.4 H12.2 V8 M3 3.4 V12.4 H7.5" fill="none" stroke="#b9bec8" stroke-width="1"/>
</g>
<circle cx="10.14" cy="10.14" r="1.95" fill="#fbd06c"/>
<path d="M13.39 10.14L13.96 10.14M12.44 12.44L12.84 12.84M10.14 13.39L10.14 13.96M7.84 12.44L7.44 12.84M6.89 10.14L6.32 10.14M7.84 7.84L7.44 7.44M10.14 6.89L10.14 6.32M12.44 7.84L12.84 7.44" fill="none" stroke="#fbd06c" stroke-width="0.78"/>
</g>
<rect x="654.2" y="558.3" width="10.8" height="8.63" fill="#fbd06c"/>
<path d="M660.9 558.7 v-2.66 a2.66 2.66 0 0 1 5.33 0 v1.18" fill="none" stroke="#fbd06c" stroke-width="1.48"/>
<rect x="659.01" y="560.89" width="1.18" height="3.62" fill="#6a5a2a"/>
<rect x="680.2" y="553.5" width="8.4" height="4.4" fill="#f6f6f6"/>
<path d="M677.8 557.1 h13.2 a0.8 0.8 0 0 1 0.8 0.8 v6.4 h-14.8 v-6.4 a0.8 0.8 0 0 1 0.8 -0.8z" fill="#ededed"/>
<rect x="679.6" y="561.7" width="9.6" height="5.6" fill="#fafafa"/>
<rect x="680.6" y="562.9" width="7.6" height="3.4" fill="#6bbcf2"/>
<rect x="700.8" y="553.3" width="13.8" height="13.8" fill="#3f8270" stroke="#ececec" stroke-width="1.2"/>
<text x="719.8" y="565.6" font-size="14.5" fill="#e6e6e6" textLength="23" lengthAdjust="spacingAndGlyphs">125</text>
<rect x="760.6" y="553.3" width="13.8" height="13.8" fill="#3f8270" stroke="#ececec" stroke-width="1.2"/>
<text x="779.2" y="565.6" font-size="14.5" fill="#e6e6e6" textLength="23" lengthAdjust="spacingAndGlyphs">125</text>
<text x="820.4" y="565.6" font-size="14.5" fill="#e6e6e6" textLength="65" lengthAdjust="spacingAndGlyphs">Continu...</text>
<text x="900.2" y="565.6" font-size="14.5" fill="#e6e6e6" textLength="65" lengthAdjust="spacingAndGlyphs">Continu...</text>
<line x1="978.2" y1="560.7" x2="1004.8" y2="560.7" stroke="#e6e6e6" stroke-width="1.2"/>
<text x="1011.4" y="565.6" font-size="14.5" fill="#e6e6e6" textLength="42.2" lengthAdjust="spacingAndGlyphs">Defa...</text>
<line x1="1063.2" y1="560.7" x2="1089.8" y2="560.7" stroke="#e6e6e6" stroke-width="1.2"/>
<text x="1096.4" y="565.6" font-size="14.5" fill="#e6e6e6" textLength="42" lengthAdjust="spacingAndGlyphs">Defa...</text>
<text x="1150.8" y="565.6" font-size="14.5" fill="#e6e6e6" textLength="8.6" lengthAdjust="spacingAndGlyphs">0</text>
<text x="1218.4" y="565.6" font-size="14.5" fill="#e6e6e6" textLength="8.6" lengthAdjust="spacingAndGlyphs">0</text>
<g transform="translate(1286.6,553.1)">
<g transform="scale(0.78)">
<rect x="1.5" y="1.5" width="12" height="12" fill="#69727f" opacity="0.55"/>
<path d="M0 4 V0 H4 M11 0 H15.5 V4 M0 11 V15.5 H4" fill="none" stroke="#b9bec8" stroke-width="1.4"/>
<path d="M3 3.4 H12.2 V8 M3 3.4 V12.4 H7.5" fill="none" stroke="#b9bec8" stroke-width="1"/>
</g>
<circle cx="10.14" cy="10.14" r="1.95" fill="#fbd06c"/>
<path d="M13.39 10.14L13.96 10.14M12.44 12.44L12.84 12.84M10.14 13.39L10.14 13.96M7.84 12.44L7.44 12.84M6.89 10.14L6.32 10.14M7.84 7.84L7.44 7.44M10.14 6.89L10.14 6.32M12.44 7.84L12.84 7.44" fill="none" stroke="#fbd06c" stroke-width="0.78"/>
</g>
<path d="M301.6 579.3 h10.8 l-5.8 7.2 h-10.9z" fill="#7ec8fa"/>
<text x="320.2" y="588.6" font-size="14.5" fill="#e6e6e6" textLength="74.4" lengthAdjust="spacingAndGlyphs">pentagono</text>
<circle cx="420.6" cy="581.7" r="5.6" fill="#fbd06c"/>
<path d="M418.14 586.45 h4.92 v2.04 a2.46 1.87 0 0 1 -4.92 0z" fill="#f4f4f4"/>
<circle cx="443.4" cy="583.1" r="4.2" fill="#fbd06c"/>
<path d="M448.9 583.1L451.6 583.1M447.29 586.99L449.2 588.9M443.4 588.6L443.4 591.3M439.51 586.99L437.6 588.9M437.9 583.1L435.2 583.1M439.51 579.21L437.6 577.3M443.4 577.6L443.4 574.9M447.29 579.21L449.2 577.3" fill="none" stroke="#fbd06c" stroke-width="1.2"/>
<g transform="translate(545.6,576.1)">
<g transform="scale(0.78)">
<rect x="1.5" y="1.5" width="12" height="12" fill="#69727f" opacity="0.55"/>
<path d="M0 4 V0 H4 M11 0 H15.5 V4 M0 11 V15.5 H4" fill="none" stroke="#b9bec8" stroke-width="1.4"/>
<path d="M3 3.4 H12.2 V8 M3 3.4 V12.4 H7.5" fill="none" stroke="#b9bec8" stroke-width="1"/>
</g>
<circle cx="10.14" cy="10.14" r="1.95" fill="#fbd06c"/>
<path d="M13.39 10.14L13.96 10.14M12.44 12.44L12.84 12.84M10.14 13.39L10.14 13.96M7.84 12.44L7.44 12.84M6.89 10.14L6.32 10.14M7.84 7.84L7.44 7.44M10.14 6.89L10.14 6.32M12.44 7.84L12.84 7.44" fill="none" stroke="#fbd06c" stroke-width="0.78"/>
</g>
<rect x="654.2" y="581.3" width="10.8" height="8.63" fill="#fbd06c"/>
<path d="M660.9 581.7 v-2.66 a2.66 2.66 0 0 1 5.33 0 v1.18" fill="none" stroke="#fbd06c" stroke-width="1.48"/>
<rect x="659.01" y="583.89" width="1.18" height="3.62" fill="#6a5a2a"/>
<rect x="680.2" y="576.5" width="8.4" height="4.4" fill="#f6f6f6"/>
<path d="M677.8 580.1 h13.2 a0.8 0.8 0 0 1 0.8 0.8 v6.4 h-14.8 v-6.4 a0.8 0.8 0 0 1 0.8 -0.8z" fill="#ededed"/>
<rect x="679.6" y="584.7" width="9.6" height="5.6" fill="#fafafa"/>
<rect x="680.6" y="585.9" width="7.6" height="3.4" fill="#6bbcf2"/>
<rect x="700.8" y="576.3" width="13.8" height="13.8" fill="#00ffff" stroke="#ececec" stroke-width="1.2"/>
<text x="719.8" y="588.6" font-size="14.5" fill="#e6e6e6" textLength="28.8" lengthAdjust="spacingAndGlyphs">cyan</text>
<rect x="760.6" y="576.3" width="13.8" height="13.8" fill="#00ffff" stroke="#ececec" stroke-width="1.2"/>
<text x="779.2" y="588.6" font-size="14.5" fill="#e6e6e6" textLength="28.8" lengthAdjust="spacingAndGlyphs">cyan</text>
<text x="820.4" y="588.6" font-size="14.5" fill="#e6e6e6" textLength="65" lengthAdjust="spacingAndGlyphs">Continu...</text>
<text x="900.2" y="588.6" font-size="14.5" fill="#e6e6e6" textLength="65" lengthAdjust="spacingAndGlyphs">Continu...</text>
<line x1="978.2" y1="583.7" x2="1004.8" y2="583.7" stroke="#e6e6e6" stroke-width="1.2"/>
<text x="1011.4" y="588.6" font-size="14.5" fill="#e6e6e6" textLength="42.2" lengthAdjust="spacingAndGlyphs">Defa...</text>
<line x1="1063.2" y1="583.7" x2="1089.8" y2="583.7" stroke="#e6e6e6" stroke-width="1.2"/>
<text x="1096.4" y="588.6" font-size="14.5" fill="#e6e6e6" textLength="42" lengthAdjust="spacingAndGlyphs">Defa...</text>
<text x="1150.8" y="588.6" font-size="14.5" fill="#e6e6e6" textLength="8.6" lengthAdjust="spacingAndGlyphs">0</text>
<text x="1218.4" y="588.6" font-size="14.5" fill="#e6e6e6" textLength="8.6" lengthAdjust="spacingAndGlyphs">0</text>
<g transform="translate(1286.6,576.1)">
<g transform="scale(0.78)">
<rect x="1.5" y="1.5" width="12" height="12" fill="#69727f" opacity="0.55"/>
<path d="M0 4 V0 H4 M11 0 H15.5 V4 M0 11 V15.5 H4" fill="none" stroke="#b9bec8" stroke-width="1.4"/>
<path d="M3 3.4 H12.2 V8 M3 3.4 V12.4 H7.5" fill="none" stroke="#b9bec8" stroke-width="1"/>
</g>
<circle cx="10.14" cy="10.14" r="1.95" fill="#fbd06c"/>
<path d="M13.39 10.14L13.96 10.14M12.44 12.44L12.84 12.84M10.14 13.39L10.14 13.96M7.84 12.44L7.44 12.84M6.89 10.14L6.32 10.14M7.84 7.84L7.44 7.44M10.14 6.89L10.14 6.32M12.44 7.84L12.84 7.44" fill="none" stroke="#fbd06c" stroke-width="0.78"/>
</g>
<path d="M301.6 602.3 h10.8 l-5.8 7.2 h-10.9z" fill="#7ec8fa"/>
<text x="320.2" y="611.6" font-size="14.5" fill="#e6e6e6" textLength="65.2" lengthAdjust="spacingAndGlyphs">quadrado</text>
<circle cx="420.6" cy="604.7" r="5.6" fill="#fbd06c"/>
<path d="M418.14 609.45 h4.92 v2.04 a2.46 1.87 0 0 1 -4.92 0z" fill="#f4f4f4"/>
<circle cx="443.4" cy="606.1" r="4.2" fill="#fbd06c"/>
<path d="M448.9 606.1L451.6 606.1M447.29 609.99L449.2 611.9M443.4 611.6L443.4 614.3M439.51 609.99L437.6 611.9M437.9 606.1L435.2 606.1M439.51 602.21L437.6 600.3M443.4 600.6L443.4 597.9M447.29 602.21L449.2 600.3" fill="none" stroke="#fbd06c" stroke-width="1.2"/>
<g transform="translate(545.6,599.1)">
<g transform="scale(0.78)">
<rect x="1.5" y="1.5" width="12" height="12" fill="#69727f" opacity="0.55"/>
<path d="M0 4 V0 H4 M11 0 H15.5 V4 M0 11 V15.5 H4" fill="none" stroke="#b9bec8" stroke-width="1.4"/>
<path d="M3 3.4 H12.2 V8 M3 3.4 V12.4 H7.5" fill="none" stroke="#b9bec8" stroke-width="1"/>
</g>
<circle cx="10.14" cy="10.14" r="1.95" fill="#fbd06c"/>
<path d="M13.39 10.14L13.96 10.14M12.44 12.44L12.84 12.84M10.14 13.39L10.14 13.96M7.84 12.44L7.44 12.84M6.89 10.14L6.32 10.14M7.84 7.84L7.44 7.44M10.14 6.89L10.14 6.32M12.44 7.84L12.84 7.44" fill="none" stroke="#fbd06c" stroke-width="0.78"/>
</g>
<rect x="654.2" y="604.3" width="10.8" height="8.63" fill="#fbd06c"/>
<path d="M660.9 604.7 v-2.66 a2.66 2.66 0 0 1 5.33 0 v1.18" fill="none" stroke="#fbd06c" stroke-width="1.48"/>
<rect x="659.01" y="606.89" width="1.18" height="3.62" fill="#6a5a2a"/>
<rect x="680.2" y="599.5" width="8.4" height="4.4" fill="#f6f6f6"/>
<path d="M677.8 603.1 h13.2 a0.8 0.8 0 0 1 0.8 0.8 v6.4 h-14.8 v-6.4 a0.8 0.8 0 0 1 0.8 -0.8z" fill="#ededed"/>
<rect x="679.6" y="607.7" width="9.6" height="5.6" fill="#fafafa"/>
<rect x="680.6" y="608.9" width="7.6" height="3.4" fill="#6bbcf2"/>
<rect x="700.8" y="599.3" width="13.8" height="13.8" fill="#ff0000" stroke="#ececec" stroke-width="1.2"/>
<text x="719.8" y="611.6" font-size="14.5" fill="#e6e6e6" textLength="21.2" lengthAdjust="spacingAndGlyphs">red</text>
<rect x="760.6" y="599.3" width="13.8" height="13.8" fill="#ff0000" stroke="#ececec" stroke-width="1.2"/>
<text x="779.2" y="611.6" font-size="14.5" fill="#e6e6e6" textLength="21.2" lengthAdjust="spacingAndGlyphs">red</text>
<text x="820.4" y="611.6" font-size="14.5" fill="#e6e6e6" textLength="65" lengthAdjust="spacingAndGlyphs">Continu...</text>
<text x="900.2" y="611.6" font-size="14.5" fill="#e6e6e6" textLength="65" lengthAdjust="spacingAndGlyphs">Continu...</text>
<line x1="978.2" y1="606.7" x2="1004.8" y2="606.7" stroke="#e6e6e6" stroke-width="1.2"/>
<text x="1011.4" y="611.6" font-size="14.5" fill="#e6e6e6" textLength="42.2" lengthAdjust="spacingAndGlyphs">Defa...</text>
<line x1="1063.2" y1="606.7" x2="1089.8" y2="606.7" stroke="#e6e6e6" stroke-width="1.2"/>
<text x="1096.4" y="611.6" font-size="14.5" fill="#e6e6e6" textLength="42" lengthAdjust="spacingAndGlyphs">Defa...</text>
<text x="1150.8" y="611.6" font-size="14.5" fill="#e6e6e6" textLength="8.6" lengthAdjust="spacingAndGlyphs">0</text>
<text x="1218.4" y="611.6" font-size="14.5" fill="#e6e6e6" textLength="8.6" lengthAdjust="spacingAndGlyphs">0</text>
<g transform="translate(1286.6,599.1)">
<g transform="scale(0.78)">
<rect x="1.5" y="1.5" width="12" height="12" fill="#69727f" opacity="0.55"/>
<path d="M0 4 V0 H4 M11 0 H15.5 V4 M0 11 V15.5 H4" fill="none" stroke="#b9bec8" stroke-width="1.4"/>
<path d="M3 3.4 H12.2 V8 M3 3.4 V12.4 H7.5" fill="none" stroke="#b9bec8" stroke-width="1"/>
</g>
<circle cx="10.14" cy="10.14" r="1.95" fill="#fbd06c"/>
<path d="M13.39 10.14L13.96 10.14M12.44 12.44L12.84 12.84M10.14 13.39L10.14 13.96M7.84 12.44L7.44 12.84M6.89 10.14L6.32 10.14M7.84 7.84L7.44 7.44M10.14 6.89L10.14 6.32M12.44 7.84L12.84 7.44" fill="none" stroke="#fbd06c" stroke-width="0.78"/>
</g>
<path d="M301.6 625.3 h10.8 l-5.8 7.2 h-10.9z" fill="#7ec8fa"/>
<text x="320.2" y="634.6" font-size="14.5" fill="#e6e6e6" textLength="55.4" lengthAdjust="spacingAndGlyphs">ret_ouro</text>
<circle cx="420.6" cy="627.7" r="5.6" fill="#fbd06c"/>
<path d="M418.14 632.45 h4.92 v2.04 a2.46 1.87 0 0 1 -4.92 0z" fill="#f4f4f4"/>
<circle cx="443.4" cy="629.1" r="4.2" fill="#fbd06c"/>
<path d="M448.9 629.1L451.6 629.1M447.29 632.99L449.2 634.9M443.4 634.6L443.4 637.3M439.51 632.99L437.6 634.9M437.9 629.1L435.2 629.1M439.51 625.21L437.6 623.3M443.4 623.6L443.4 620.9M447.29 625.21L449.2 623.3" fill="none" stroke="#fbd06c" stroke-width="1.2"/>
<g transform="translate(545.6,622.1)">
<g transform="scale(0.78)">
<rect x="1.5" y="1.5" width="12" height="12" fill="#69727f" opacity="0.55"/>
<path d="M0 4 V0 H4 M11 0 H15.5 V4 M0 11 V15.5 H4" fill="none" stroke="#b9bec8" stroke-width="1.4"/>
<path d="M3 3.4 H12.2 V8 M3 3.4 V12.4 H7.5" fill="none" stroke="#b9bec8" stroke-width="1"/>
</g>
<circle cx="10.14" cy="10.14" r="1.95" fill="#fbd06c"/>
<path d="M13.39 10.14L13.96 10.14M12.44 12.44L12.84 12.84M10.14 13.39L10.14 13.96M7.84 12.44L7.44 12.84M6.89 10.14L6.32 10.14M7.84 7.84L7.44 7.44M10.14 6.89L10.14 6.32M12.44 7.84L12.84 7.44" fill="none" stroke="#fbd06c" stroke-width="0.78"/>
</g>
<rect x="654.2" y="627.3" width="10.8" height="8.63" fill="#fbd06c"/>
<path d="M660.9 627.7 v-2.66 a2.66 2.66 0 0 1 5.33 0 v1.18" fill="none" stroke="#fbd06c" stroke-width="1.48"/>
<rect x="659.01" y="629.89" width="1.18" height="3.62" fill="#6a5a2a"/>
<rect x="680.2" y="622.5" width="8.4" height="4.4" fill="#f6f6f6"/>
<path d="M677.8 626.1 h13.2 a0.8 0.8 0 0 1 0.8 0.8 v6.4 h-14.8 v-6.4 a0.8 0.8 0 0 1 0.8 -0.8z" fill="#ededed"/>
<rect x="679.6" y="630.7" width="9.6" height="5.6" fill="#fafafa"/>
<rect x="680.6" y="631.9" width="7.6" height="3.4" fill="#6bbcf2"/>
<rect x="700.8" y="622.3" width="13.8" height="13.8" fill="#ff00ff" stroke="#ececec" stroke-width="1.2"/>
<text x="719.8" y="634.6" font-size="14.5" fill="#e6e6e6" textLength="32" lengthAdjust="spacingAndGlyphs">ma...</text>
<rect x="760.6" y="622.3" width="13.8" height="13.8" fill="#ff00ff" stroke="#ececec" stroke-width="1.2"/>
<text x="779.2" y="634.6" font-size="14.5" fill="#e6e6e6" textLength="32" lengthAdjust="spacingAndGlyphs">ma...</text>
<text x="820.4" y="634.6" font-size="14.5" fill="#e6e6e6" textLength="65" lengthAdjust="spacingAndGlyphs">Continu...</text>
<text x="900.2" y="634.6" font-size="14.5" fill="#e6e6e6" textLength="65" lengthAdjust="spacingAndGlyphs">Continu...</text>
<line x1="978.2" y1="629.7" x2="1004.8" y2="629.7" stroke="#e6e6e6" stroke-width="1.2"/>
<text x="1011.4" y="634.6" font-size="14.5" fill="#e6e6e6" textLength="42.2" lengthAdjust="spacingAndGlyphs">Defa...</text>
<line x1="1063.2" y1="629.7" x2="1089.8" y2="629.7" stroke="#e6e6e6" stroke-width="1.2"/>
<text x="1096.4" y="634.6" font-size="14.5" fill="#e6e6e6" textLength="42" lengthAdjust="spacingAndGlyphs">Defa...</text>
<text x="1150.8" y="634.6" font-size="14.5" fill="#e6e6e6" textLength="8.6" lengthAdjust="spacingAndGlyphs">0</text>
<text x="1218.4" y="634.6" font-size="14.5" fill="#e6e6e6" textLength="8.6" lengthAdjust="spacingAndGlyphs">0</text>
<g transform="translate(1286.6,622.1)">
<g transform="scale(0.78)">
<rect x="1.5" y="1.5" width="12" height="12" fill="#69727f" opacity="0.55"/>
<path d="M0 4 V0 H4 M11 0 H15.5 V4 M0 11 V15.5 H4" fill="none" stroke="#b9bec8" stroke-width="1.4"/>
<path d="M3 3.4 H12.2 V8 M3 3.4 V12.4 H7.5" fill="none" stroke="#b9bec8" stroke-width="1"/>
</g>
<circle cx="10.14" cy="10.14" r="1.95" fill="#fbd06c"/>
<path d="M13.39 10.14L13.96 10.14M12.44 12.44L12.84 12.84M10.14 13.39L10.14 13.96M7.84 12.44L7.44 12.84M6.89 10.14L6.32 10.14M7.84 7.84L7.44 7.44M10.14 6.89L10.14 6.32M12.44 7.84L12.84 7.44" fill="none" stroke="#fbd06c" stroke-width="0.78"/>
</g>
<path d="M301.6 648.3 h10.8 l-5.8 7.2 h-10.9z" fill="#7ec8fa"/>
<text x="320.2" y="657.6" font-size="14.5" fill="#e6e6e6" textLength="36.4" lengthAdjust="spacingAndGlyphs">ret_r2</text>
<circle cx="420.6" cy="650.7" r="5.6" fill="#fbd06c"/>
<path d="M418.14 655.45 h4.92 v2.04 a2.46 1.87 0 0 1 -4.92 0z" fill="#f4f4f4"/>
<circle cx="443.4" cy="652.1" r="4.2" fill="#fbd06c"/>
<path d="M448.9 652.1L451.6 652.1M447.29 655.99L449.2 657.9M443.4 657.6L443.4 660.3M439.51 655.99L437.6 657.9M437.9 652.1L435.2 652.1M439.51 648.21L437.6 646.3M443.4 646.6L443.4 643.9M447.29 648.21L449.2 646.3" fill="none" stroke="#fbd06c" stroke-width="1.2"/>
<g transform="translate(545.6,645.1)">
<g transform="scale(0.78)">
<rect x="1.5" y="1.5" width="12" height="12" fill="#69727f" opacity="0.55"/>
<path d="M0 4 V0 H4 M11 0 H15.5 V4 M0 11 V15.5 H4" fill="none" stroke="#b9bec8" stroke-width="1.4"/>
<path d="M3 3.4 H12.2 V8 M3 3.4 V12.4 H7.5" fill="none" stroke="#b9bec8" stroke-width="1"/>
</g>
<circle cx="10.14" cy="10.14" r="1.95" fill="#fbd06c"/>
<path d="M13.39 10.14L13.96 10.14M12.44 12.44L12.84 12.84M10.14 13.39L10.14 13.96M7.84 12.44L7.44 12.84M6.89 10.14L6.32 10.14M7.84 7.84L7.44 7.44M10.14 6.89L10.14 6.32M12.44 7.84L12.84 7.44" fill="none" stroke="#fbd06c" stroke-width="0.78"/>
</g>
<rect x="654.2" y="650.3" width="10.8" height="8.63" fill="#fbd06c"/>
<path d="M660.9 650.7 v-2.66 a2.66 2.66 0 0 1 5.33 0 v1.18" fill="none" stroke="#fbd06c" stroke-width="1.48"/>
<rect x="659.01" y="652.89" width="1.18" height="3.62" fill="#6a5a2a"/>
<rect x="680.2" y="645.5" width="8.4" height="4.4" fill="#f6f6f6"/>
<path d="M677.8 649.1 h13.2 a0.8 0.8 0 0 1 0.8 0.8 v6.4 h-14.8 v-6.4 a0.8 0.8 0 0 1 0.8 -0.8z" fill="#ededed"/>
<rect x="679.6" y="653.7" width="9.6" height="5.6" fill="#fafafa"/>
<rect x="680.6" y="654.9" width="7.6" height="3.4" fill="#6bbcf2"/>
<rect x="700.8" y="645.3" width="13.8" height="13.8" fill="#0000ff" stroke="#ececec" stroke-width="1.2"/>
<text x="719.8" y="657.6" font-size="14.5" fill="#e6e6e6" textLength="29.8" lengthAdjust="spacingAndGlyphs">blue</text>
<rect x="760.6" y="645.3" width="13.8" height="13.8" fill="#0000ff" stroke="#ececec" stroke-width="1.2"/>
<text x="779.2" y="657.6" font-size="14.5" fill="#e6e6e6" textLength="29.8" lengthAdjust="spacingAndGlyphs">blue</text>
<text x="820.4" y="657.6" font-size="14.5" fill="#e6e6e6" textLength="65" lengthAdjust="spacingAndGlyphs">Continu...</text>
<text x="900.2" y="657.6" font-size="14.5" fill="#e6e6e6" textLength="65" lengthAdjust="spacingAndGlyphs">Continu...</text>
<line x1="978.2" y1="652.7" x2="1004.8" y2="652.7" stroke="#e6e6e6" stroke-width="1.2"/>
<text x="1011.4" y="657.6" font-size="14.5" fill="#e6e6e6" textLength="42.2" lengthAdjust="spacingAndGlyphs">Defa...</text>
<line x1="1063.2" y1="652.7" x2="1089.8" y2="652.7" stroke="#e6e6e6" stroke-width="1.2"/>
<text x="1096.4" y="657.6" font-size="14.5" fill="#e6e6e6" textLength="42" lengthAdjust="spacingAndGlyphs">Defa...</text>
<text x="1150.8" y="657.6" font-size="14.5" fill="#e6e6e6" textLength="8.6" lengthAdjust="spacingAndGlyphs">0</text>
<text x="1218.4" y="657.6" font-size="14.5" fill="#e6e6e6" textLength="8.6" lengthAdjust="spacingAndGlyphs">0</text>
<g transform="translate(1286.6,645.1)">
<g transform="scale(0.78)">
<rect x="1.5" y="1.5" width="12" height="12" fill="#69727f" opacity="0.55"/>
<path d="M0 4 V0 H4 M11 0 H15.5 V4 M0 11 V15.5 H4" fill="none" stroke="#b9bec8" stroke-width="1.4"/>
<path d="M3 3.4 H12.2 V8 M3 3.4 V12.4 H7.5" fill="none" stroke="#b9bec8" stroke-width="1"/>
</g>
<circle cx="10.14" cy="10.14" r="1.95" fill="#fbd06c"/>
<path d="M13.39 10.14L13.96 10.14M12.44 12.44L12.84 12.84M10.14 13.39L10.14 13.96M7.84 12.44L7.44 12.84M6.89 10.14L6.32 10.14M7.84 7.84L7.44 7.44M10.14 6.89L10.14 6.32M12.44 7.84L12.84 7.44" fill="none" stroke="#fbd06c" stroke-width="0.78"/>
</g>
<path d="M301.6 671.3 h10.8 l-5.8 7.2 h-10.9z" fill="#7ec8fa"/>
<text x="320.2" y="680.6" font-size="14.5" fill="#e6e6e6" textLength="61.2" lengthAdjust="spacingAndGlyphs">triangulo</text>
<circle cx="420.6" cy="673.7" r="5.6" fill="#fbd06c"/>
<path d="M418.14 678.45 h4.92 v2.04 a2.46 1.87 0 0 1 -4.92 0z" fill="#f4f4f4"/>
<circle cx="443.4" cy="675.1" r="4.2" fill="#fbd06c"/>
<path d="M448.9 675.1L451.6 675.1M447.29 678.99L449.2 680.9M443.4 680.6L443.4 683.3M439.51 678.99L437.6 680.9M437.9 675.1L435.2 675.1M439.51 671.21L437.6 669.3M443.4 669.6L443.4 666.9M447.29 671.21L449.2 669.3" fill="none" stroke="#fbd06c" stroke-width="1.2"/>
<g transform="translate(545.6,668.1)">
<g transform="scale(0.78)">
<rect x="1.5" y="1.5" width="12" height="12" fill="#69727f" opacity="0.55"/>
<path d="M0 4 V0 H4 M11 0 H15.5 V4 M0 11 V15.5 H4" fill="none" stroke="#b9bec8" stroke-width="1.4"/>
<path d="M3 3.4 H12.2 V8 M3 3.4 V12.4 H7.5" fill="none" stroke="#b9bec8" stroke-width="1"/>
</g>
<circle cx="10.14" cy="10.14" r="1.95" fill="#fbd06c"/>
<path d="M13.39 10.14L13.96 10.14M12.44 12.44L12.84 12.84M10.14 13.39L10.14 13.96M7.84 12.44L7.44 12.84M6.89 10.14L6.32 10.14M7.84 7.84L7.44 7.44M10.14 6.89L10.14 6.32M12.44 7.84L12.84 7.44" fill="none" stroke="#fbd06c" stroke-width="0.78"/>
</g>
<rect x="654.2" y="673.3" width="10.8" height="8.63" fill="#fbd06c"/>
<path d="M660.9 673.7 v-2.66 a2.66 2.66 0 0 1 5.33 0 v1.18" fill="none" stroke="#fbd06c" stroke-width="1.48"/>
<rect x="659.01" y="675.89" width="1.18" height="3.62" fill="#6a5a2a"/>
<rect x="680.2" y="668.5" width="8.4" height="4.4" fill="#f6f6f6"/>
<path d="M677.8 672.1 h13.2 a0.8 0.8 0 0 1 0.8 0.8 v6.4 h-14.8 v-6.4 a0.8 0.8 0 0 1 0.8 -0.8z" fill="#ededed"/>
<rect x="679.6" y="676.7" width="9.6" height="5.6" fill="#fafafa"/>
<rect x="680.6" y="677.9" width="7.6" height="3.4" fill="#6bbcf2"/>
<rect x="700.8" y="668.3" width="13.8" height="13.8" fill="#00ff00" stroke="#ececec" stroke-width="1.2"/>
<text x="719.8" y="680.6" font-size="14.5" fill="#e6e6e6" textLength="32.8" lengthAdjust="spacingAndGlyphs">gre...</text>
<rect x="760.6" y="668.3" width="13.8" height="13.8" fill="#00ff00" stroke="#ececec" stroke-width="1.2"/>
<text x="779.2" y="680.6" font-size="14.5" fill="#e6e6e6" textLength="32.8" lengthAdjust="spacingAndGlyphs">gre...</text>
<text x="820.4" y="680.6" font-size="14.5" fill="#e6e6e6" textLength="65" lengthAdjust="spacingAndGlyphs">Continu...</text>
<text x="900.2" y="680.6" font-size="14.5" fill="#e6e6e6" textLength="65" lengthAdjust="spacingAndGlyphs">Continu...</text>
<line x1="978.2" y1="675.7" x2="1004.8" y2="675.7" stroke="#e6e6e6" stroke-width="1.2"/>
<text x="1011.4" y="680.6" font-size="14.5" fill="#e6e6e6" textLength="42.2" lengthAdjust="spacingAndGlyphs">Defa...</text>
<line x1="1063.2" y1="675.7" x2="1089.8" y2="675.7" stroke="#e6e6e6" stroke-width="1.2"/>
<text x="1096.4" y="680.6" font-size="14.5" fill="#e6e6e6" textLength="42" lengthAdjust="spacingAndGlyphs">Defa...</text>
<text x="1150.8" y="680.6" font-size="14.5" fill="#e6e6e6" textLength="8.6" lengthAdjust="spacingAndGlyphs">0</text>
<text x="1218.4" y="680.6" font-size="14.5" fill="#e6e6e6" textLength="8.6" lengthAdjust="spacingAndGlyphs">0</text>
<g transform="translate(1286.6,668.1)">
<g transform="scale(0.78)">
<rect x="1.5" y="1.5" width="12" height="12" fill="#69727f" opacity="0.55"/>
<path d="M0 4 V0 H4 M11 0 H15.5 V4 M0 11 V15.5 H4" fill="none" stroke="#b9bec8" stroke-width="1.4"/>
<path d="M3 3.4 H12.2 V8 M3 3.4 V12.4 H7.5" fill="none" stroke="#b9bec8" stroke-width="1"/>
</g>
<circle cx="10.14" cy="10.14" r="1.95" fill="#fbd06c"/>
<path d="M13.39 10.14L13.96 10.14M12.44 12.44L12.84 12.84M10.14 13.39L10.14 13.96M7.84 12.44L7.44 12.84M6.89 10.14L6.32 10.14M7.84 7.84L7.44 7.44M10.14 6.89L10.14 6.32M12.44 7.84L12.84 7.44" fill="none" stroke="#fbd06c" stroke-width="0.78"/>
</g>
<rect x="292.8" y="695" width="1236.6" height="21" fill="#f0f0f0"/>
<rect x="313.8" y="703.8" width="1140.2" height="2.8" fill="#a2a2a2"/>
<text x="174.4" y="752.4" font-size="14.5" fill="#e6e6e6" textLength="265.4" lengthAdjust="spacingAndGlyphs">All: 11 layers displayed of 11 total layers</text>
<rect x="4.2" y="983.2" width="1292.6" height="29.4" fill="#3b4453"/>
<rect x="1302.2" y="983.2" width="51.2" height="29.4" fill="#3b4453"/>
<rect x="1357.2" y="983.2" width="210.8" height="29.4" fill="#3b4453"/>
<rect x="1571.4" y="983.2" width="89.2" height="29.4" fill="#3b4453"/>
<rect x="1664" y="983.2" width="49.6" height="29.4" fill="#3b4453"/>
<rect x="1715.2" y="983.2" width="30.2" height="29.4" fill="#3b4453"/>
<rect x="1748.6" y="983.2" width="28.6" height="29.4" fill="#3b4453"/>
<rect x="1780.8" y="983.2" width="68" height="29.4" fill="#3b4453"/>
<rect x="1852" y="983.2" width="59.6" height="29.4" fill="#3b4453"/>
<text x="1307" y="1003.4" font-size="14.5" fill="#f2f2f2" textLength="43" lengthAdjust="spacingAndGlyphs">PAPER</text>
<path d="M1362.6 988 V1007.4 H1382 M1362.6 1001.4 H1368.6 V1007.4" fill="none" stroke="#c4c4c4" stroke-width="1.1"/>
<rect x="1388" y="984" width="28.2" height="28.2" fill="#5b8cc8"/>
<circle cx="1399.6" cy="998.6" r="7.8" fill="none" stroke="#f0f0f0" stroke-width="1.4"/>
<path d="M1399.6 998.6 H1412 M1399.6 998.6 L1408.4 988.6" fill="none" stroke="#f0f0f0" stroke-width="1.4"/>
<path d="M1421.6 995.1h10.4l-5.2 5.4z" fill="#d2d2d2"/>
<line x1="1452" y1="988" x2="1452" y2="1006.4" stroke="#44c878" stroke-width="1.1"/>
<line x1="1444.2" y1="989.2" x2="1459.4" y2="1005" stroke="#d85058" stroke-width="1.1"/>
<rect x="1450.4" y="995.6" width="3.2" height="3.2" fill="#3b4453" stroke="#e6e6e6" stroke-width="1"/>
<path d="M1472 995.1h10.4l-5.2 5.4z" fill="#d2d2d2"/>
<rect x="1489" y="984" width="28.2" height="28.2" fill="#5b8cc8"/>
<path d="M1493.6 1005 H1513.2 M1493.6 1005 L1508.6 990" fill="none" stroke="#f0f0f0" stroke-width="1.3"/>
<rect x="1498.8" y="996" width="3.6" height="3.6" fill="#ffffff"/>
<rect x="1525.6" y="991" width="17" height="16.4" fill="none" stroke="#c8c8c8" stroke-width="1.1"/>
<rect x="1523" y="988.4" width="5.8" height="5.4" fill="#3b4453" stroke="#f0a060" stroke-width="1.1"/>
<path d="M1553 995.1h10.4l-5.2 5.4z" fill="#d2d2d2"/>
<rect x="1576.4" y="988.8" width="19.6" height="18.2" fill="none" stroke="#d2d2d2" stroke-width="1.3" stroke-dasharray="3.4 2"/>
<rect x="1582.8" y="995" width="8.2" height="8" fill="none" stroke="#d2d2d2" stroke-width="1.3"/>
<path d="M1576.4 988.8 l5.6 5.6" fill="none" stroke="#d2d2d2" stroke-width="1.2"/>
<path d="M1615.2 989.2 L1618.9 999 L1624.3 1007.8 L1615.2 1002.2 L1606.1 1007.8 L1611.5 999z" fill="#dcdcdc"/>
<circle cx="1622.4" cy="989.8" r="2.5" fill="none" stroke="#d2d2d2" stroke-width="1.1"/>
<path d="M1645.2 989.2 L1648.9 999 L1654.3 1007.8 L1645.2 1002.2 L1636.1 1007.8 L1641.5 999z" fill="#dcdcdc"/>
<path d="M1652.6 986.6 l-3 4.4 h2.4 l-2.4 4.4 l5.4 -5.8 h-2.4 l2.4 -3z" fill="#e4e4e4"/>
<path d="M1688.6 995.41L1688.6 999.39L1685.49 999.49L1684.95 1000.79L1687.08 1003.07L1684.27 1005.88L1681.99 1003.75L1680.69 1004.29L1680.59 1007.4L1676.61 1007.4L1676.51 1004.29L1675.21 1003.75L1672.93 1005.88L1670.12 1003.07L1672.25 1000.79L1671.71 999.49L1668.6 999.39L1668.6 995.41L1671.71 995.31L1672.25 994.01L1670.12 991.73L1672.93 988.92L1675.21 991.05L1676.51 990.51L1676.61 987.4L1680.59 987.4L1680.69 990.51L1681.99 991.05L1684.27 988.92L1687.08 991.73L1684.95 994.01L1685.49 995.31zM1681.8 997.4a3.2 3.2 0 1 0 -6.4 0a3.2 3.2 0 1 0 6.4 0z" fill="#d4d4d4" fill-rule="evenodd"/>
<path d="M1698.6 995.1h10.4l-5.2 5.4z" fill="#d2d2d2"/>
<path d="M1720 997.4 h18.2 M1729.1 988.4 v18" fill="none" stroke="#e6e6e6" stroke-width="2.8"/>
<rect x="1754.2" y="988.8" width="6" height="6" fill="none" stroke="#d2d2d2" stroke-width="1.2"/>
<circle cx="1768.4" cy="997.2" r="4" fill="none" stroke="#d2d2d2" stroke-width="1.2"/>
<path d="M1761 999.6 l4.4 7.6 h-8.8z" fill="none" stroke="#d2d2d2" stroke-width="1.2"/>
<path d="M1786 991.4 l9 -4.4 l10 4.4 v10 l-10 5 l-9 -5z" fill="#3f7fd0"/>
<path d="M1786 991.4 l9 4 l10 -4 l-10 -4.4z" fill="#72b4f2"/>
<path d="M1789.6 986.4 v5 M1787 988.8 h5.2" fill="none" stroke="#f0f0f0" stroke-width="1"/>
<rect x="1784.6" y="999.4" width="12" height="10" fill="#f2c040"/>
<path d="M1796 1003 l4.4 4.6 l8.6 -9.4" fill="none" stroke="#3fcf6a" stroke-width="2.8"/>
<path d="M1824.6 991.2 a8.6 8.6 0 1 1 -1.2 10.4" fill="none" stroke="#d8d8d8" stroke-width="1.6"/>
<path d="M1821.2 991 l4.4 -2 l0.4 4.8z" fill="#d8d8d8"/>
<path d="M1832 992 v6 h4.4" fill="none" stroke="#d8d8d8" stroke-width="1.3"/>
<rect x="1820.4" y="997.6" width="9.6" height="12" fill="#3f7fd0"/>
<rect x="1822" y="1004" width="8" height="5.6" fill="#f2c040"/>
<rect x="1822.4" y="999.4" width="4" height="3" fill="#9fd0ff"/>
<circle cx="1835.8" cy="1005.4" r="4.2" fill="#3f8fe8"/>
<text x="1835.8" y="1008.2" font-size="7.5" fill="#ffffff" font-weight="bold" text-anchor="middle">i</text>
<rect x="1857.8" y="990.8" width="19.4" height="14.2" fill="none" stroke="#d2d2d2" stroke-width="1.3"/>
<path d="M1861.4 1001.6 l4.2 -3.8 M1873.6 994.2 l-4.2 3.8" fill="none" stroke="#d2d2d2" stroke-width="1.3"/>
<path d="M1860.4 1002.6 v-4 l4 4z M1874.6 993.2 v4 l-4 -4z" fill="#d2d2d2"/>
<rect x="1887" y="988.5" width="20.6" height="2.6" fill="#e2e2e2"/>
<rect x="1887" y="996.1" width="20.6" height="2.6" fill="#e2e2e2"/>
<rect x="1887" y="1003.7" width="20.6" height="2.6" fill="#e2e2e2"/>
</svg>
</body></html>
